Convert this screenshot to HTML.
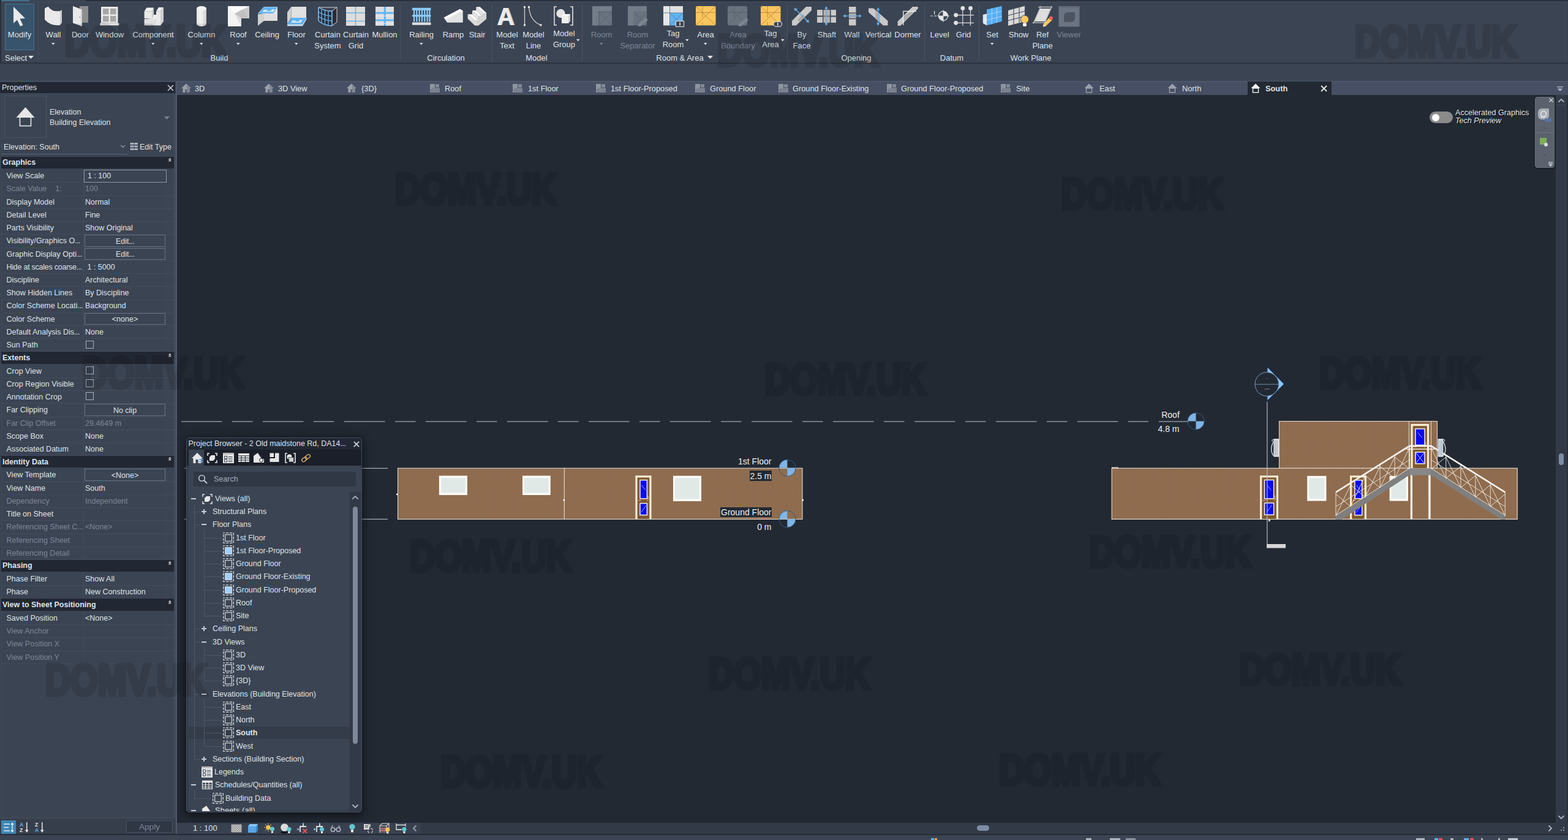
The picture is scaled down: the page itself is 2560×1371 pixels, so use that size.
<!DOCTYPE html>
<html><head><meta charset="utf-8"><title>Revit</title>
<style>
html,body{margin:0;padding:0;}
body{width:2560px;height:1371px;overflow:hidden;background:#3b4453;font-family:"Liberation Sans",sans-serif;color:#dfe3e8;position:relative;}
.a{position:absolute;box-sizing:border-box;}
.t{white-space:nowrap;line-height:16px;font-size:13px;}
.d{color:#7c8696;}
.b{font-weight:bold;}
.wm{font-weight:bold;font-size:71px;line-height:74px;color:#000;opacity:0.1;transform-origin:0 0;transform:scaleX(0.803);white-space:nowrap;-webkit-text-stroke:7px #000;letter-spacing:0px;}
svg{overflow:visible;}
</style></head><body>
<div class="a" style="left:140px;top:0px;width:2420px;height:1.5px;background:#2a313c;"></div>
<div class="a" style="left:0px;top:0px;width:48px;height:1.5px;background:#44718f;"></div>
<div class="a" style="left:0px;top:102.3px;width:2560px;height:1.4px;background:#2d343f;"></div>
<div class="a" style="left:0px;top:0px;width:2px;height:104px;background:#2a303b;"></div>
<div class="a" style="left:2px;top:2.6px;width:2553px;height:1px;background:#424b5a;"></div>
<div class="a" style="left:2554.5px;top:3px;width:1px;height:99px;background:#424b5a;"></div>
<div class="a" style="left:62px;top:6px;width:1px;height:94px;background:#4a5363;"></div>
<div class="a" style="left:653px;top:6px;width:1px;height:94px;background:#4a5363;"></div>
<div class="a" style="left:803px;top:6px;width:1px;height:94px;background:#4a5363;"></div>
<div class="a" style="left:950px;top:6px;width:1px;height:94px;background:#4a5363;"></div>
<div class="a" style="left:1285px;top:6px;width:1px;height:94px;background:#4a5363;"></div>
<div class="a" style="left:1509px;top:6px;width:1px;height:94px;background:#4a5363;"></div>
<div class="a" style="left:1598px;top:6px;width:1px;height:94px;background:#4a5363;"></div>
<div class="a" style="left:8px;top:6px;width:48px;height:76px;background:#37546c;border:1px solid #48728f;"></div>
<svg class="a" style="left:16px;top:10px;" width="32" height="34" viewBox="0 0 32 34"><polygon points="6,1 6,28 12,22.5 17,33 21.5,31 16.5,20.5 25,20" fill="#e9e9e9"/></svg>
<div class="a t " style="left:-168px;width:400px;text-align:center;top:49.4px;font-size:13px;">Modify</div>
<svg class="a" style="left:71px;top:10px;" width="32" height="34" viewBox="0 0 32 34"><path d="M2,4 Q5,1 8,1 Q14,10 27,8 L27,31 Q12,33 2,22 Z" fill="#e9e9e9"/><path d="M27,8 L30,6 L30,27 L27,31 Z" fill="#cfcfcf"/></svg>
<div class="a t " style="left:-113px;width:400px;text-align:center;top:49.4px;font-size:13px;">Wall</div>
<svg class="a" style="left:84.2px;top:70px;" width="5.6" height="3.3" viewBox="0 0 5.6 3.3"><polygon points="0,0 5.6,0 2.8,3.3" fill="#e4e7eb"/></svg>
<svg class="a" style="left:115px;top:10px;" width="32" height="34" viewBox="0 0 32 34"><rect x="15" y="0" width="14" height="27" fill="#8e8e8e"/><polygon points="4,0 19,5.5 19,33 4,27.5" fill="#e9e9e9"/><polygon points="17,5 19,5.5 19,33 17,32.3" fill="#cfcfcf"/><circle cx="15.5" cy="18" r="0.9" fill="#999"/></svg>
<div class="a t " style="left:-69px;width:400px;text-align:center;top:49.4px;font-size:13px;">Door</div>
<svg class="a" style="left:163px;top:10px;" width="32" height="34" viewBox="0 0 32 34"><rect x="2" y="1" width="27.5" height="26.5" fill="#e9e9e9"/><rect x="5" y="4" width="9.5" height="9.5" fill="#a6a6a6"/><rect x="17" y="4" width="9.5" height="9.5" fill="#a6a6a6"/><rect x="5" y="16" width="9.5" height="9.5" fill="#a6a6a6"/><rect x="17" y="16" width="9.5" height="9.5" fill="#a6a6a6"/><rect x="0" y="27.5" width="31.5" height="4" rx="1.5" fill="#e2e2e2"/></svg>
<div class="a t " style="left:-21px;width:400px;text-align:center;top:49.4px;font-size:13px;">Window</div>
<svg class="a" style="left:234px;top:10px;" width="32" height="34" viewBox="0 0 32 34"><polygon points="1.6,8.5 5.5,2.5 17,2.5 14,8.5" fill="#f2f2f2"/><rect x="1.6" y="8.5" width="12.4" height="11.5" fill="#e9e9e9"/><polygon points="14,8.5 17,2.5 17,14 14,20" fill="#cfcfcf"/><polygon points="21,8.5 25,2 33,2 28,8.5" fill="#f2f2f2"/><rect x="21" y="8.5" width="7" height="23" fill="#e9e9e9"/><polygon points="28,8.5 33,2 33,25 28,31.5" fill="#cfcfcf"/><rect x="1.6" y="21" width="20" height="10.5" fill="#e0e0e0"/><polygon points="14,20 17,14 21,14 21,21 1.6,21" fill="#ededed"/></svg>
<div class="a t " style="left:50px;width:400px;text-align:center;top:49.4px;font-size:13px;">Component</div>
<svg class="a" style="left:247.2px;top:70px;" width="5.6" height="3.3" viewBox="0 0 5.6 3.3"><polygon points="0,0 5.6,0 2.8,3.3" fill="#e4e7eb"/></svg>
<svg class="a" style="left:313px;top:10px;" width="32" height="34" viewBox="0 0 32 34"><defs><linearGradient id="cg" x1="0" x2="1"><stop offset="0" stop-color="#e2e2e2"/><stop offset="0.45" stop-color="#f4f4f4"/><stop offset="1" stop-color="#cdcdcd"/></linearGradient></defs><path d="M8,4 A8,4 0 0 1 24,4 L24,29 A8,4 0 0 1 8,29 Z" fill="url(#cg)"/><ellipse cx="16" cy="4" rx="8" ry="3.6" fill="#f3f3f3"/></svg>
<div class="a t " style="left:129px;width:400px;text-align:center;top:49.4px;font-size:13px;">Column</div>
<svg class="a" style="left:326.2px;top:70px;" width="5.6" height="3.3" viewBox="0 0 5.6 3.3"><polygon points="0,0 5.6,0 2.8,3.3" fill="#e4e7eb"/></svg>
<svg class="a" style="left:373px;top:10px;" width="32" height="34" viewBox="0 0 32 34"><polygon points="-1,0 34,0 34,20 21,20 21,33 -1,33" fill="#f3f3f3"/><polygon points="10,12 34,0 34,20 21,20" fill="#c9c9c9"/><polygon points="10,12 21,20 21,33" fill="#dcdcdc"/><polygon points="-1,0 34,0 10,12" fill="#fafafa"/><polygon points="10,12 24,5 31,17 21,20" fill="#b9b9b9" opacity="0.55"/></svg>
<div class="a t " style="left:189px;width:400px;text-align:center;top:49.4px;font-size:13px;">Roof</div>
<svg class="a" style="left:386.2px;top:70px;" width="5.6" height="3.3" viewBox="0 0 5.6 3.3"><polygon points="0,0 5.6,0 2.8,3.3" fill="#e4e7eb"/></svg>
<svg class="a" style="left:420px;top:10px;" width="32" height="34" viewBox="0 0 32 34"><polygon points="1,12 11,1 33,1 33,13 11,13" fill="#e3e3e3"/><polygon points="2,12 11,1.5 33,1.5 26,12" fill="#5fb3f3"/><polygon points="8,9.5 11,6 17,6 15,8 22,8 24,5 29,5 26,9.5" fill="#d9eefc" opacity="0.9"/><rect x="11" y="13" width="22" height="11" fill="#dedede"/><polygon points="1,13 11,13 11,24 1,32" fill="#d0d0d0"/></svg>
<div class="a t " style="left:236px;width:400px;text-align:center;top:49.4px;font-size:13px;">Ceiling</div>
<svg class="a" style="left:468px;top:10px;" width="32" height="34" viewBox="0 0 32 34"><rect x="7.5" y="1" width="24.5" height="18" fill="#e0e0e0"/><polygon points="1,10 7.5,1 7.5,19 1,29" fill="#cfcfcf"/><polygon points="1,29.5 8,19 32.5,19 26,29.5" fill="#5fb3f3"/><polygon points="7,27 9.5,23.5 15,23.5 14,25 20,25 21.5,22.5 26,22.5 23,27" fill="#d9eefc" opacity="0.9"/><polygon points="1,29.5 26,29.5 32.5,19 32.5,21.5 26,32.5 1,32.5" fill="#c8e3f8"/></svg>
<div class="a t " style="left:284px;width:400px;text-align:center;top:49.4px;font-size:13px;">Floor</div>
<svg class="a" style="left:481.2px;top:70px;" width="5.6" height="3.3" viewBox="0 0 5.6 3.3"><polygon points="0,0 5.6,0 2.8,3.3" fill="#e4e7eb"/></svg>
<svg class="a" style="left:519px;top:10px;" width="32" height="34" viewBox="0 0 32 34"><path d="M1,2 Q12,9 23,8 L31,2 L31,26 L23,32 Q10,32 1,24 Z" fill="#252d3a" stroke="#d8d8d8" stroke-width="1"/><path d="M1,2 L31,2 M23,8 L23,32" stroke="#d8d8d8" stroke-width="1" fill="none"/><path d="M1,2 Q12,9 23,8 M1,9.5 Q12,16.5 23,16 M1,17 Q12,24 23,24 M1,24 Q10,32 23,32 M1,2 L1,24 M6,5 L6,28 M11.5,7 L11.5,30.5 M17,8 L17,31.8 M23,8 L23,32" stroke="#6ab4ee" stroke-width="1.3" fill="none"/></svg>
<div class="a t " style="left:335px;width:400px;text-align:center;top:49.4px;font-size:13px;">Curtain</div>
<div class="a t " style="left:335px;width:400px;text-align:center;top:67.0px;font-size:13px;">System</div>
<svg class="a" style="left:565px;top:10px;" width="32" height="34" viewBox="0 0 32 34"><rect x="0" y="1" width="31" height="31" fill="#dddddd"/><rect x="14.8" y="1" width="1.4" height="31" fill="#5fb3f3"/><rect x="0" y="10.3" width="31" height="1.4" fill="#5fb3f3"/><rect x="0" y="23.8" width="31" height="1.4" fill="#5fb3f3"/></svg>
<div class="a t " style="left:381px;width:400px;text-align:center;top:49.4px;font-size:13px;">Curtain</div>
<div class="a t " style="left:381px;width:400px;text-align:center;top:67.0px;font-size:13px;">Grid</div>
<svg class="a" style="left:612px;top:10px;" width="32" height="34" viewBox="0 0 32 34"><rect x="1" y="1" width="30" height="31" fill="#dddddd"/><rect x="14.8" y="1" width="3" height="31" fill="#5fb3f3"/><rect x="1" y="9.7" width="30" height="2.8" fill="#5fb3f3"/><rect x="1" y="21.6" width="30" height="2.8" fill="#5fb3f3"/><rect x="1" y="15.5" width="30" height="1" fill="#f2f2f2"/><rect x="1" y="27.5" width="30" height="1" fill="#f2f2f2"/></svg>
<div class="a t " style="left:428px;width:400px;text-align:center;top:49.4px;font-size:13px;">Mullion</div>
<svg class="a" style="left:672px;top:10px;" width="32" height="34" viewBox="0 0 32 34"><rect x="1" y="2.8" width="30.5" height="4" fill="#8fcbf7"/><rect x="1" y="14.2" width="30.5" height="3" fill="#8fcbf7"/><rect x="3" y="6" width="2.2" height="19.5" fill="#8fcbf7"/><rect x="7.3" y="6" width="2.2" height="19.5" fill="#8fcbf7"/><rect x="11.6" y="6" width="2.2" height="19.5" fill="#8fcbf7"/><rect x="15.9" y="6" width="2.2" height="19.5" fill="#8fcbf7"/><rect x="20.2" y="6" width="2.2" height="19.5" fill="#8fcbf7"/><rect x="24.5" y="6" width="2.2" height="19.5" fill="#8fcbf7"/><rect x="28.3" y="6" width="2.2" height="19.5" fill="#8fcbf7"/><rect x="1" y="26.5" width="30.5" height="4.3" fill="#dedede"/></svg>
<div class="a t " style="left:488px;width:400px;text-align:center;top:49.4px;font-size:13px;">Railing</div>
<svg class="a" style="left:685.2px;top:70px;" width="5.6" height="3.3" viewBox="0 0 5.6 3.3"><polygon points="0,0 5.6,0 2.8,3.3" fill="#e4e7eb"/></svg>
<svg class="a" style="left:724px;top:10px;" width="32" height="34" viewBox="0 0 32 34"><polygon points="0.5,18.8 27,4.8 31.5,7.6 31.5,26.6 6,26.6" fill="#ededed"/><polygon points="0.5,18.8 27,4.8 31.5,7.6 6,21" fill="#fafafa"/><polygon points="6,21 31.5,7.6 31.5,26.6 6,26.6" fill="#e2e2e2"/></svg>
<div class="a t " style="left:540px;width:400px;text-align:center;top:49.4px;font-size:13px;">Ramp</div>
<svg class="a" style="left:763px;top:10px;" width="32" height="34" viewBox="0 0 32 34"><polygon points="24.9,11.1 31.2,11.1 31.2,20.9 18.5,31.5 12.2,31.5 11.2,30.05 11.2,23.05 18.6,23.05 18.6,16.75 24.9,16.75" fill="#d4d4d4"/><polygon points="14.3,1.25 20.6,1.25 31.2,11.1 24.9,11.1" fill="#f8f8f8"/><polygon points="14.3,6.9 8,6.9 18.6,16.75 24.9,16.75" fill="#f8f8f8"/><polygon points="8,13.2 0.6,13.2 11.2,23.05 18.6,23.05" fill="#f8f8f8"/><polygon points="14.3,1.25 14.3,6.9 24.9,16.75 24.9,11.1" fill="#e4e4e4"/><polygon points="8,6.9 8,13.2 18.6,23.05 18.6,16.75" fill="#e4e4e4"/><polygon points="0.6,13.2 0.6,20.2 12.2,31.5 11.2,23.05" fill="#e4e4e4"/><polygon points="0.6,20.2 12.2,31.5 18.5,31.5 11.2,23.05" fill="#dadada"/></svg>
<div class="a t " style="left:579px;width:400px;text-align:center;top:49.4px;font-size:13px;">Stair</div>
<svg class="a" style="left:812px;top:10px;" width="32" height="34" viewBox="0 0 32 34"><text x="15" y="31" font-family="Liberation Sans,sans-serif" font-weight="bold" font-size="40" text-anchor="middle" fill="#c4c4c4">A</text><text x="13.5" y="31" font-family="Liberation Sans,sans-serif" font-weight="bold" font-size="40" text-anchor="middle" fill="#ececec">A</text></svg>
<div class="a t " style="left:628px;width:400px;text-align:center;top:49.4px;font-size:13px;">Model</div>
<div class="a t " style="left:628px;width:400px;text-align:center;top:67.0px;font-size:13px;">Text</div>
<svg class="a" style="left:855px;top:10px;" width="32" height="34" viewBox="0 0 32 34"><path d="M1.5,1 L1.5,31 M8.5,1 Q10,24 28,31" stroke="#d2d2d2" stroke-width="1.3" fill="none"/><rect x="0" y="0" width="3" height="3" fill="#e6e6e6"/><rect x="0" y="29.5" width="3" height="3" fill="#e6e6e6"/><rect x="7" y="0" width="3" height="3" fill="#e6e6e6"/><rect x="26.5" y="29.5" width="3" height="3" fill="#e6e6e6"/></svg>
<div class="a t " style="left:671px;width:400px;text-align:center;top:49.4px;font-size:13px;">Model</div>
<div class="a t " style="left:671px;width:400px;text-align:center;top:67.0px;font-size:13px;">Line</div>
<svg class="a" style="left:905px;top:10px;" width="32" height="34" viewBox="0 0 32 34"><path d="M4,1 L0,1 L0,31 L4,31 M26,1 L30,1 L30,31 L26,31" stroke="#e0e0e0" stroke-width="1.6" fill="none"/><circle cx="10.5" cy="12" r="7.2" fill="#e4e4e4"/><polygon points="12,16 15,13 26,13 26,24 23,28 12,28" fill="#f0f0f0"/><polygon points="23,16 26,13 26,24 23,28" fill="#cfcfcf"/><polygon points="12,16 15,13 26,13 23,16" fill="#fafafa"/></svg>
<div class="a t " style="left:721px;width:400px;text-align:center;top:47.3px;font-size:13px;">Model</div>
<div class="a t " style="left:721px;width:400px;text-align:center;top:64.8px;font-size:13px;">Group</div>
<svg class="a" style="left:940.7px;top:63.5px;" width="5.6" height="3.3" viewBox="0 0 5.6 3.3"><polygon points="0,0 5.6,0 2.8,3.3" fill="#e4e7eb"/></svg>
<svg class="a" style="left:966px;top:10px;" width="32" height="34" viewBox="0 0 32 34"><rect x="1" y="0" width="32" height="31.5" fill="#6a7380"/><rect x="1" y="0" width="9" height="31.5" fill="#747d8a"/><rect x="10" y="0" width="23" height="8" fill="#747d8a"/><path d="M12,10 L33,31.5 M33,10 L12,31.5 M12,8 L12,31.5 M10,10 L33,10" stroke="#596270" stroke-width="1" fill="none"/></svg>
<div class="a t d" style="left:782px;width:400px;text-align:center;top:49.4px;font-size:13px;">Room</div>
<svg class="a" style="left:979.2px;top:70px;" width="5.6" height="3.3" viewBox="0 0 5.6 3.3"><polygon points="0,0 5.6,0 2.8,3.3" fill="#7c8696"/></svg>
<svg class="a" style="left:1025px;top:10px;" width="32" height="34" viewBox="0 0 32 34"><rect x="0" y="0" width="31" height="31.5" fill="#69727f"/><rect x="0" y="0" width="9" height="31.5" fill="#737c89"/><rect x="9" y="0" width="22" height="8" fill="#737c89"/><path d="M11,10 L31,31.5 M31,10 L11,31.5" stroke="#596270" stroke-width="1"/><polygon points="29,19 33,22.5 21,33 17,33 17,29.5" fill="#7b8491"/></svg>
<div class="a t d" style="left:841px;width:400px;text-align:center;top:49.4px;font-size:13px;">Room</div>
<div class="a t d" style="left:841px;width:400px;text-align:center;top:67.0px;font-size:13px;">Separator</div>
<svg class="a" style="left:1083px;top:10px;" width="32" height="34" viewBox="0 0 32 34"><rect x="0" y="0" width="10.5" height="31.5" fill="#e6e6e6"/><rect x="10.5" y="0" width="21.5" height="11" fill="#e0e0e0"/><rect x="10.5" y="11" width="21.5" height="20.5" fill="#62b4f1"/><path d="M10.5,11 L32,31.5 M32,11 L10.5,31.5 M10.5,0 L10.5,31.5 M0,11 L32,11" stroke="#5a7d99" stroke-width="0.9" fill="none"/><rect x="20.5" y="24.5" width="13" height="9" fill="#3a4250" stroke="#d8d8d8" stroke-width="1.2"/><rect x="26.3" y="26.3" width="1.6" height="5.4" fill="#e8e8e8"/></svg>
<div class="a t " style="left:899px;width:400px;text-align:center;top:47.3px;font-size:13px;">Tag</div>
<div class="a t " style="left:899px;width:400px;text-align:center;top:64.8px;font-size:13px;">Room</div>
<svg class="a" style="left:1119.2px;top:63.5px;" width="5.6" height="3.3" viewBox="0 0 5.6 3.3"><polygon points="0,0 5.6,0 2.8,3.3" fill="#e4e7eb"/></svg>
<svg class="a" style="left:1136px;top:10px;" width="32" height="34" viewBox="0 0 32 34"><rect x="0" y="0" width="32.5" height="31.5" rx="2" fill="#fbc660"/><path d="M1,1 L31.5,30.5 M31.5,1 L1,30.5 M11,0 L11,18 M0,10.4 L32.5,10.4 M11,26 L11,31.5" stroke="#b98d3c" stroke-width="1" fill="none"/></svg>
<div class="a t " style="left:952px;width:400px;text-align:center;top:49.4px;font-size:13px;">Area</div>
<svg class="a" style="left:1149.2px;top:70px;" width="5.6" height="3.3" viewBox="0 0 5.6 3.3"><polygon points="0,0 5.6,0 2.8,3.3" fill="#e4e7eb"/></svg>
<svg class="a" style="left:1189px;top:10px;" width="32" height="34" viewBox="0 0 32 34"><rect x="-1" y="0" width="32" height="31.5" rx="2" fill="#69727f"/><path d="M0,1 L30,30.5 M30,1 L0,30.5 M10,0 L10,18 M-1,10.4 L31,10.4" stroke="#596270" stroke-width="1" fill="none"/><polygon points="29,19 33,22.5 21,33 17,33 17,29.5" fill="#7b8491"/></svg>
<div class="a t d" style="left:1005px;width:400px;text-align:center;top:49.4px;font-size:13px;">Area</div>
<div class="a t d" style="left:1005px;width:400px;text-align:center;top:67.0px;font-size:13px;">Boundary</div>
<svg class="a" style="left:1242px;top:10px;" width="32" height="34" viewBox="0 0 32 34"><rect x="0" y="0" width="32.5" height="31.5" rx="2" fill="#fbc660"/><path d="M1,1 L31.5,30.5 M31.5,1 L1,30.5 M11,0 L11,18 M0,10.4 L32.5,10.4 M11,26 L11,31.5" stroke="#b98d3c" stroke-width="1" fill="none"/><rect x="21" y="25.3" width="13.5" height="8" rx="4" fill="#3a4250" stroke="#d8d8d8" stroke-width="1.2"/><rect x="27" y="26.8" width="1.5" height="5" fill="#e8e8e8"/></svg>
<div class="a t " style="left:1058px;width:400px;text-align:center;top:47.3px;font-size:13px;">Tag</div>
<div class="a t " style="left:1058px;width:400px;text-align:center;top:64.8px;font-size:13px;">Area</div>
<svg class="a" style="left:1274.7px;top:63.5px;" width="5.6" height="3.3" viewBox="0 0 5.6 3.3"><polygon points="0,0 5.6,0 2.8,3.3" fill="#e4e7eb"/></svg>
<svg class="a" style="left:1293px;top:10px;" width="32" height="34" viewBox="0 0 32 34"><defs><pattern id="hp" width="3" height="3" patternUnits="userSpaceOnUse" patternTransform="rotate(45)"><rect width="3" height="3" fill="#b9b9b9"/><rect width="1.6" height="3" fill="#d8d8d8"/></pattern></defs><polygon points="0,31.5 0,24 23,1 32,1 32,7 7,31.5" fill="url(#hp)"/><path d="M4.6,4 L27,26" stroke="#6aaee6" stroke-width="1.5"/><polygon points="3.5,3 9,4.2 4.7,8.5" fill="#6aaee6"/><polygon points="28,27 22.5,25.8 26.8,21.5" fill="#6aaee6"/><polygon points="9,22.5 18,13.5 21,16.5 12,25.5" fill="#9a9a9a" opacity="0.7"/></svg>
<div class="a t " style="left:1109px;width:400px;text-align:center;top:49.4px;font-size:13px;">By</div>
<div class="a t " style="left:1109px;width:400px;text-align:center;top:67.0px;font-size:13px;">Face</div>
<svg class="a" style="left:1334px;top:10px;" width="32" height="34" viewBox="0 0 32 34"><defs><pattern id="hp" width="3" height="3" patternUnits="userSpaceOnUse" patternTransform="rotate(45)"><rect width="3" height="3" fill="#b9b9b9"/><rect width="1.6" height="3" fill="#d8d8d8"/></pattern></defs><rect x="0" y="6" width="31" height="9.5" fill="url(#hp)"/><rect x="0" y="17.5" width="31" height="9.5" fill="url(#hp)"/><rect x="9" y="6" width="1.5" height="21" fill="#3b4453"/><rect x="21" y="6" width="1.5" height="21" fill="#3b4453"/><rect x="10.5" y="6" width="10.5" height="21" fill="#9c9c9c" opacity="0.55"/><path d="M15,2 L15,30" stroke="#6aaee6" stroke-width="1.4"/><polygon points="15,0 17.8,4.5 12.2,4.5" fill="#6aaee6"/><polygon points="15,32 17.8,27.5 12.2,27.5" fill="#6aaee6"/></svg>
<div class="a t " style="left:1150px;width:400px;text-align:center;top:49.4px;font-size:13px;">Shaft</div>
<svg class="a" style="left:1375px;top:10px;" width="32" height="34" viewBox="0 0 32 34"><defs><pattern id="hp" width="3" height="3" patternUnits="userSpaceOnUse" patternTransform="rotate(45)"><rect width="3" height="3" fill="#b9b9b9"/><rect width="1.6" height="3" fill="#d8d8d8"/></pattern></defs><rect x="11" y="1" width="11.5" height="30.5" fill="url(#hp)"/><rect x="11" y="10.5" width="11.5" height="1.3" fill="#3b4453"/><rect x="11" y="20" width="11.5" height="1.3" fill="#3b4453"/><rect x="11" y="11.8" width="11.5" height="8.2" fill="#9c9c9c" opacity="0.6"/><path d="M3,16 L30,16" stroke="#6aaee6" stroke-width="1.4"/><polygon points="1,16 5.5,13.2 5.5,18.8" fill="#6aaee6"/><polygon points="32,16 27.5,13.2 27.5,18.8" fill="#6aaee6"/></svg>
<div class="a t " style="left:1191px;width:400px;text-align:center;top:49.4px;font-size:13px;">Wall</div>
<svg class="a" style="left:1418px;top:10px;" width="32" height="34" viewBox="0 0 32 34"><defs><pattern id="hp" width="3" height="3" patternUnits="userSpaceOnUse" patternTransform="rotate(45)"><rect width="3" height="3" fill="#b9b9b9"/><rect width="1.6" height="3" fill="#d8d8d8"/></pattern></defs><polygon points="0,3.4 8,3.4 31.5,24 31.5,31.5 24,31.5 0,10" fill="url(#hp)"/><polygon points="11,8 19,14 19,26 11,19" fill="#9c9c9c" opacity="0.6"/><path d="M15.6,4 L15.6,30" stroke="#6aaee6" stroke-width="1.4"/><polygon points="15.6,2 18.4,6.5 12.8,6.5" fill="#6aaee6"/><polygon points="15.6,32 18.4,27.5 12.8,27.5" fill="#6aaee6"/></svg>
<div class="a t " style="left:1234px;width:400px;text-align:center;top:49.4px;font-size:13px;">Vertical</div>
<svg class="a" style="left:1466px;top:10px;" width="32" height="34" viewBox="0 0 32 34"><defs><pattern id="hp" width="3" height="3" patternUnits="userSpaceOnUse" patternTransform="rotate(45)"><rect width="3" height="3" fill="#b9b9b9"/><rect width="1.6" height="3" fill="#d8d8d8"/></pattern></defs><polygon points="-0.4,32 -0.4,25 24,1 32.7,1 32.7,4 4,32" fill="url(#hp)"/><polygon points="9,15.5 24,8.5 24,11 12,23 9,25" fill="#a3a3a3" opacity="0.8"/><path d="M8.8,31 L8.8,8.3 L30,8.3" stroke="#f0f0f0" stroke-width="1.3" fill="none"/></svg>
<div class="a t " style="left:1282px;width:400px;text-align:center;top:49.4px;font-size:13px;">Dormer</div>
<svg class="a" style="left:1518px;top:10px;" width="32" height="34" viewBox="0 0 32 34"><circle cx="22" cy="16" r="7.6" fill="none" stroke="#e0e0e0" stroke-width="1.3"/><path d="M22,16 L22,8.4 A7.6,7.6 0 0 1 29.6,16 Z M22,16 L22,23.6 A7.6,7.6 0 0 1 14.4,16 Z" fill="#e6e6e6"/><path d="M22,6 L22,26 M12,16 L32,16" stroke="#e0e0e0" stroke-width="1"/><path d="M1,16 L5,16 M7,16 L11,16" stroke="#e0e0e0" stroke-width="1"/><rect x="7" y="8" width="1.3" height="5.5" fill="#e0e0e0"/></svg>
<div class="a t " style="left:1334px;width:400px;text-align:center;top:49.4px;font-size:13px;">Level</div>
<svg class="a" style="left:1557px;top:10px;" width="32" height="34" viewBox="0 0 32 34"><path d="M14.8,3.4 L14.8,32 M27.5,3.4 L27.5,32 M3.6,14.6 L33,14.6 M3.6,27.3 L33,27.3" stroke="#dcdcdc" stroke-width="1.2" fill="none"/><circle cx="14.8" cy="3.4" r="3.4" fill="#e2e2e2"/><circle cx="27.5" cy="3.4" r="3.4" fill="#e2e2e2"/><circle cx="3.6" cy="14.6" r="3.4" fill="#e2e2e2"/><circle cx="3.6" cy="27.3" r="3.4" fill="#e2e2e2"/></svg>
<div class="a t " style="left:1373px;width:400px;text-align:center;top:49.4px;font-size:13px;">Grid</div>
<svg class="a" style="left:1604px;top:10px;" width="32" height="34" viewBox="0 0 32 34"><polygon points="7,5.5 31.7,-0.2 31.7,25 7,31.5" fill="#58aef2"/><path d="M15.2,3.6 L15.2,29.3 M23.4,1.7 L23.4,27.2 M7,14.2 L31.7,8.2 M7,22.8 L31.7,16.6" stroke="#a9d6f8" stroke-width="1" fill="none"/><polygon points="0.8,14 7,12.5 7,31.5 0.8,28" fill="#e8e8e8"/></svg>
<div class="a t " style="left:1420px;width:400px;text-align:center;top:49.4px;font-size:13px;">Set</div>
<svg class="a" style="left:1617.2px;top:70px;" width="5.6" height="3.3" viewBox="0 0 5.6 3.3"><polygon points="0,0 5.6,0 2.8,3.3" fill="#e4e7eb"/></svg>
<svg class="a" style="left:1647px;top:10px;" width="32" height="34" viewBox="0 0 32 34"><polygon points="-1,7 26,-0.2 26,25 -1,32" fill="#d9d9d9"/><path d="M8,4.6 L8,29.6 M17,2.2 L17,27.3 M-1,15.3 L26,8.2 M-1,23.6 L26,16.6" stroke="#3b4453" stroke-width="1" fill="none"/><circle cx="26" cy="21.6" r="6.6" fill="#fcc75f" stroke="#3b4453" stroke-width="1"/><rect x="23" y="27.5" width="6" height="5.5" rx="1.5" fill="#f0f0f0"/></svg>
<div class="a t " style="left:1463px;width:400px;text-align:center;top:49.4px;font-size:13px;">Show</div>
<svg class="a" style="left:1686px;top:10px;" width="32" height="34" viewBox="0 0 32 34"><polygon points="12,4 30,4 20.7,25 2.5,25" fill="#dedede"/><path d="M9,1.5 L32,1.5 M0,27 L23,27 M13.5,0 L1,28.5 M31.5,0 L19,28.5" stroke="#bdbdbd" stroke-width="1.4" fill="none"/><polygon points="27,19 31.5,23 21,33 17,33.6 17.5,29.5" fill="#fbc660"/><polygon points="17,33.6 17.5,29.5 21,33" fill="#e8e8e8"/><circle cx="30" cy="19.5" r="3" fill="#e8605a"/></svg>
<div class="a t " style="left:1502px;width:400px;text-align:center;top:49.4px;font-size:13px;">Ref</div>
<div class="a t " style="left:1502px;width:400px;text-align:center;top:67.0px;font-size:13px;">Plane</div>
<svg class="a" style="left:1729px;top:10px;" width="32" height="34" viewBox="0 0 32 34"><rect x="-0.5" y="0" width="34" height="33.5" fill="#6b7482"/><rect x="-0.5" y="0" width="34" height="3" fill="#626a78"/><polygon points="8,14 12,10 26,10 26,22 22,26 8,26" fill="#4d5562"/></svg>
<div class="a t d" style="left:1545px;width:400px;text-align:center;top:49.4px;font-size:13px;">Viewer</div>
<div class="a t " style="left:8px;top:86.8px;font-size:13px;">Select</div>
<div class="a t " style="left:158px;width:400px;text-align:center;top:86.8px;font-size:13px;">Build</div>
<div class="a t " style="left:528px;width:400px;text-align:center;top:86.8px;font-size:13px;">Circulation</div>
<div class="a t " style="left:676px;width:400px;text-align:center;top:86.8px;font-size:13px;">Model</div>
<div class="a t " style="left:910px;width:400px;text-align:center;top:86.8px;font-size:13px;">Room &amp; Area</div>
<div class="a t " style="left:1198px;width:400px;text-align:center;top:86.8px;font-size:13px;">Opening</div>
<div class="a t " style="left:1354px;width:400px;text-align:center;top:86.8px;font-size:13px;">Datum</div>
<div class="a t " style="left:1483px;width:400px;text-align:center;top:86.8px;font-size:13px;">Work Plane</div>
<svg class="a" style="left:46px;top:91px;" width="9" height="5" viewBox="0 0 9 5"><polygon points="0,0 9,0 4.5,5" fill="#e4e7eb"/></svg>
<svg class="a" style="left:1155px;top:91px;" width="9" height="5" viewBox="0 0 9 5"><polygon points="0,0 9,0 4.5,5" fill="#e4e7eb"/></svg>
<div class="a" style="left:288.5px;top:132px;width:2271.5px;height:23px;background:#464f63;"></div>
<div class="a" style="left:0px;top:132.2px;width:2560px;height:1.5px;background:#4d576a;"></div>
<svg class="a" style="left:296px;top:136px;" width="16" height="15" viewBox="0 0 16 15"><polygon points="0,8 8,0.5 16,8 13.5,8 13.5,15 2.5,15 2.5,8" fill="#9aa1ad"/><polygon points="8,0.5 16,8 13.5,8 13.5,15 9,15 9,6" fill="#7f8794"/><rect x="6" y="10" width="3" height="5" fill="#5c6573"/></svg>
<div class="a t " style="left:318px;top:136.5px;font-size:12.8px;">3D</div>
<svg class="a" style="left:431px;top:136px;" width="16" height="15" viewBox="0 0 16 15"><polygon points="0,8 8,0.5 16,8 13.5,8 13.5,15 2.5,15 2.5,8" fill="#9aa1ad"/><polygon points="8,0.5 16,8 13.5,8 13.5,15 9,15 9,6" fill="#7f8794"/><rect x="6" y="10" width="3" height="5" fill="#5c6573"/></svg>
<div class="a t " style="left:454px;top:136.5px;font-size:12.8px;">3D View</div>
<svg class="a" style="left:566px;top:136px;" width="16" height="15" viewBox="0 0 16 15"><polygon points="0,8 8,0.5 16,8 13.5,8 13.5,15 2.5,15 2.5,8" fill="#9aa1ad"/><polygon points="8,0.5 16,8 13.5,8 13.5,15 9,15 9,6" fill="#7f8794"/><rect x="6" y="10" width="3" height="5" fill="#5c6573"/></svg>
<div class="a t " style="left:590px;top:136.5px;font-size:12.8px;">{3D}</div>
<svg class="a" style="left:702px;top:136px;" width="16" height="15" viewBox="0 0 16 15"><rect x="0" y="1" width="8" height="9" fill="#8d95a1"/><rect x="9" y="1.5" width="6" height="5" fill="#848c99"/><rect x="3" y="7.5" width="13" height="7.5" fill="#7a8290"/><rect x="0" y="10.5" width="2.5" height="4.5" fill="#8d95a1"/></svg>
<div class="a t " style="left:726px;top:136.5px;font-size:12.8px;">Roof</div>
<svg class="a" style="left:837px;top:136px;" width="16" height="15" viewBox="0 0 16 15"><rect x="0" y="1" width="8" height="9" fill="#8d95a1"/><rect x="9" y="1.5" width="6" height="5" fill="#848c99"/><rect x="3" y="7.5" width="13" height="7.5" fill="#7a8290"/><rect x="0" y="10.5" width="2.5" height="4.5" fill="#8d95a1"/></svg>
<div class="a t " style="left:862px;top:136.5px;font-size:12.8px;">1st Floor</div>
<svg class="a" style="left:973px;top:136px;" width="16" height="15" viewBox="0 0 16 15"><rect x="0" y="1" width="8" height="9" fill="#8d95a1"/><rect x="9" y="1.5" width="6" height="5" fill="#848c99"/><rect x="3" y="7.5" width="13" height="7.5" fill="#7a8290"/><rect x="0" y="10.5" width="2.5" height="4.5" fill="#8d95a1"/></svg>
<div class="a t " style="left:997px;top:136.5px;font-size:12.8px;">1st Floor-Proposed</div>
<svg class="a" style="left:1135px;top:136px;" width="16" height="15" viewBox="0 0 16 15"><rect x="0" y="1" width="8" height="9" fill="#8d95a1"/><rect x="9" y="1.5" width="6" height="5" fill="#848c99"/><rect x="3" y="7.5" width="13" height="7.5" fill="#7a8290"/><rect x="0" y="10.5" width="2.5" height="4.5" fill="#8d95a1"/></svg>
<div class="a t " style="left:1159px;top:136.5px;font-size:12.8px;">Ground Floor</div>
<svg class="a" style="left:1271px;top:136px;" width="16" height="15" viewBox="0 0 16 15"><rect x="0" y="1" width="8" height="9" fill="#8d95a1"/><rect x="9" y="1.5" width="6" height="5" fill="#848c99"/><rect x="3" y="7.5" width="13" height="7.5" fill="#7a8290"/><rect x="0" y="10.5" width="2.5" height="4.5" fill="#8d95a1"/></svg>
<div class="a t " style="left:1294px;top:136.5px;font-size:12.8px;">Ground Floor-Existing</div>
<svg class="a" style="left:1448px;top:136px;" width="16" height="15" viewBox="0 0 16 15"><rect x="0" y="1" width="8" height="9" fill="#8d95a1"/><rect x="9" y="1.5" width="6" height="5" fill="#848c99"/><rect x="3" y="7.5" width="13" height="7.5" fill="#7a8290"/><rect x="0" y="10.5" width="2.5" height="4.5" fill="#8d95a1"/></svg>
<div class="a t " style="left:1471px;top:136.5px;font-size:12.8px;">Ground Floor-Proposed</div>
<svg class="a" style="left:1634px;top:136px;" width="16" height="15" viewBox="0 0 16 15"><rect x="0" y="1" width="8" height="9" fill="#8d95a1"/><rect x="9" y="1.5" width="6" height="5" fill="#848c99"/><rect x="3" y="7.5" width="13" height="7.5" fill="#7a8290"/><rect x="0" y="10.5" width="2.5" height="4.5" fill="#8d95a1"/></svg>
<div class="a t " style="left:1659px;top:136.5px;font-size:12.8px;">Site</div>
<svg class="a" style="left:1770px;top:136px;" width="16" height="16" viewBox="0 0 16 16"><polygon points="0.5,8 8,0.5 15.5,8" fill="#9aa1ad"/><rect x="3.5" y="8" width="9" height="7" fill="none" stroke="#9aa1ad" stroke-width="1.4"/></svg>
<div class="a t " style="left:1795px;top:136.5px;font-size:12.8px;">East</div>
<svg class="a" style="left:1906px;top:136px;" width="16" height="16" viewBox="0 0 16 16"><polygon points="0.5,8 8,0.5 15.5,8" fill="#9aa1ad"/><rect x="3.5" y="8" width="9" height="7" fill="none" stroke="#9aa1ad" stroke-width="1.4"/></svg>
<div class="a t " style="left:1930px;top:136.5px;font-size:12.8px;">North</div>
<div class="a" style="left:2037px;top:133px;width:137px;height:22px;background:#222933;"></div>
<svg class="a" style="left:2042px;top:135.5px;" width="16" height="16" viewBox="0 0 16 16"><polygon points="0.5,8 8,0.5 15.5,8" fill="#f0f0f0"/><rect x="3.5" y="8" width="9" height="7" fill="none" stroke="#f0f0f0" stroke-width="1.4"/></svg>
<div class="a t b" style="left:2066px;top:136.5px;font-size:12.8px;">South</div>
<svg class="a" style="left:2156px;top:139px;" width="11" height="11" viewBox="0 0 11 11"><path d="M1,1 L10,10 M10,1 L1,10" stroke="#e6e6e6" stroke-width="1.8"/></svg>
<svg class="a" style="left:2542px;top:141px;" width="10" height="8" viewBox="0 0 10 8"><rect x="0" y="0" width="10" height="1.5" fill="#aab1bd"/><polygon points="0.5,3.5 9.5,3.5 5,8" fill="#aab1bd"/></svg>
<div class="a" style="left:0px;top:133px;width:287px;height:1230px;background:#3b4453;"></div>
<div class="a" style="left:284.5px;top:153px;width:2px;height:1185px;background:#444d5d;"></div>
<div class="a" style="left:286.5px;top:134px;width:2px;height:1228px;background:#4f596b;"></div>
<div class="a" style="left:0px;top:134px;width:286.2px;height:18px;background:#212733;"></div>
<div class="a t " style="left:3px;top:134.5px;font-size:12.5px;">Properties</div>
<svg class="a" style="left:273px;top:138px;" width="11" height="11" viewBox="0 0 11 11"><path d="M1,1 L10,10 M10,1 L1,10" stroke="#c6cad2" stroke-width="1.7"/></svg>
<div class="a" style="left:2px;top:153px;width:282px;height:1182px;border:1px solid #424b5a;"></div>
<div class="a" style="left:7px;top:156px;width:69px;height:69px;border:1px solid #4c5566;"></div>
<svg class="a" style="left:26px;top:175px;" width="32" height="32" viewBox="0 0 32 32"><polygon points="0.5,17 15.5,0 30.5,17" fill="#e6e6e6"/><rect x="6.5" y="14.5" width="18" height="16" fill="none" stroke="#e6e6e6" stroke-width="1.6"/></svg>
<div class="a t " style="left:81px;top:175.0px;font-size:12.5px;">Elevation</div>
<div class="a t " style="left:81px;top:192.0px;font-size:12.5px;">Building Elevation</div>
<svg class="a" style="left:268px;top:190px;" width="9" height="5" viewBox="0 0 9 5"><polygon points="0,0 9,0 4.5,5" fill="#78828f"/></svg>
<div class="a t " style="left:6px;top:231.5px;font-size:12.5px;">Elevation: South</div>
<svg class="a" style="left:196px;top:236px;" width="9" height="6" viewBox="0 0 9 6"><path d="M1,1 L4.5,4.5 L8,1" stroke="#8a94a2" stroke-width="1.4" fill="none"/></svg>
<svg class="a" style="left:213px;top:233px;" width="12" height="12" viewBox="0 0 12 12"><rect x="0" y="0" width="5" height="3" fill="#dfe3e8"/><rect x="6.5" y="0" width="5" height="3" fill="#dfe3e8"/><rect x="0" y="4.5" width="5" height="3" fill="#dfe3e8"/><rect x="6.5" y="4.5" width="5" height="3" fill="#dfe3e8"/><rect x="0" y="9" width="5" height="3" fill="#dfe3e8"/><rect x="6.5" y="9" width="5" height="3" fill="#dfe3e8"/><rect x="2" y="0" width="1" height="12" fill="#3b4453"/><rect x="8.5" y="0" width="1" height="12" fill="#3b4453"/></svg>
<div class="a t " style="left:228px;top:231.5px;font-size:12.5px;">Edit Type</div>
<div class="a" style="left:2px;top:250.5px;width:208px;height:1.5px;background:#5b6577;"></div>
<div class="a" style="left:2px;top:255.6px;width:282px;height:19.6px;background:#212733;"></div>
<div class="a t b" style="left:4px;top:257.4px;font-size:12.5px;">Graphics</div>
<svg class="a" style="left:275.4px;top:258.2px;" width="4.6" height="6" viewBox="0 0 4.6 6"><path d="M0.5,2.6 L2.3,0.8 L4.1,2.6 M0.5,5.4 L2.3,3.6 L4.1,5.4" stroke="#eef0f3" stroke-width="1.2" fill="none"/></svg>
<div class="a" style="left:4px;top:297.4px;width:280px;height:1px;background:#434c5b;"></div>
<div class="a" style="left:136px;top:276.8px;width:1px;height:21.225px;background:#434c5b;"></div>
<div class="a" style="left:271px;top:276.8px;width:1px;height:21.225px;background:#3f4857;"></div>
<div class="a t " style="left:10.5px;top:279.22499999999997px;font-size:12.5px;">View Scale</div>
<div class="a" style="left:137px;top:277.2px;width:134.5px;height:20.6px;border:1.5px solid #8d96a4;"></div>
<div class="a t " style="left:143px;top:279.22499999999997px;font-size:12.5px;">1 : 100</div>
<div class="a" style="left:4px;top:318.7px;width:280px;height:1px;background:#434c5b;"></div>
<div class="a" style="left:136px;top:298.1px;width:1px;height:21.225px;background:#434c5b;"></div>
<div class="a" style="left:271px;top:298.1px;width:1px;height:21.225px;background:#3f4857;"></div>
<div class="a t d" style="left:10.5px;top:300.45px;font-size:12.5px;">Scale Value&nbsp;&nbsp;&nbsp; 1:</div>
<div class="a t d" style="left:139px;top:300.45px;font-size:12.5px;">100</div>
<div class="a" style="left:4px;top:339.9px;width:280px;height:1px;background:#434c5b;"></div>
<div class="a" style="left:136px;top:319.3px;width:1px;height:21.225px;background:#434c5b;"></div>
<div class="a" style="left:271px;top:319.3px;width:1px;height:21.225px;background:#3f4857;"></div>
<div class="a t " style="left:10.5px;top:321.67499999999995px;font-size:12.5px;">Display Model</div>
<div class="a t " style="left:139px;top:321.67499999999995px;font-size:12.5px;">Normal</div>
<div class="a" style="left:4px;top:361.1px;width:280px;height:1px;background:#434c5b;"></div>
<div class="a" style="left:136px;top:340.5px;width:1px;height:21.225px;background:#434c5b;"></div>
<div class="a" style="left:271px;top:340.5px;width:1px;height:21.225px;background:#3f4857;"></div>
<div class="a t " style="left:10.5px;top:342.9px;font-size:12.5px;">Detail Level</div>
<div class="a t " style="left:139px;top:342.9px;font-size:12.5px;">Fine</div>
<div class="a" style="left:4px;top:382.4px;width:280px;height:1px;background:#434c5b;"></div>
<div class="a" style="left:136px;top:361.7px;width:1px;height:21.225px;background:#434c5b;"></div>
<div class="a" style="left:271px;top:361.7px;width:1px;height:21.225px;background:#3f4857;"></div>
<div class="a t " style="left:10.5px;top:364.125px;font-size:12.5px;">Parts Visibility</div>
<div class="a t " style="left:139px;top:364.125px;font-size:12.5px;">Show Original</div>
<div class="a" style="left:4px;top:403.6px;width:280px;height:1px;background:#434c5b;"></div>
<div class="a" style="left:136px;top:382.9px;width:1px;height:21.225px;background:#434c5b;"></div>
<div class="a" style="left:271px;top:382.9px;width:1px;height:21.225px;background:#3f4857;"></div>
<div class="a t " style="left:10.5px;top:385.34999999999997px;font-size:12.5px;">Visibility/Graphics O<span style="letter-spacing:-0.6px">...</span></div>
<div class="a" style="left:138px;top:383.3px;width:131.8px;height:19.8px;border:1px solid #687285;"></div>
<div class="a t " style="left:4px;width:400px;text-align:center;top:385.95px;font-size:12.5px;">Edit<span style="letter-spacing:-0.6px">...</span></div>
<div class="a" style="left:4px;top:424.8px;width:280px;height:1px;background:#434c5b;"></div>
<div class="a" style="left:136px;top:404.2px;width:1px;height:21.225px;background:#434c5b;"></div>
<div class="a" style="left:271px;top:404.2px;width:1px;height:21.225px;background:#3f4857;"></div>
<div class="a t " style="left:10.5px;top:406.575px;font-size:12.5px;">Graphic Display Opti<span style="letter-spacing:-0.6px">...</span></div>
<div class="a" style="left:138px;top:404.6px;width:131.8px;height:19.8px;border:1px solid #687285;"></div>
<div class="a t " style="left:4px;width:400px;text-align:center;top:407.175px;font-size:12.5px;">Edit<span style="letter-spacing:-0.6px">...</span></div>
<div class="a" style="left:4px;top:446.0px;width:280px;height:1px;background:#434c5b;"></div>
<div class="a" style="left:136px;top:425.4px;width:1px;height:21.225px;background:#434c5b;"></div>
<div class="a" style="left:271px;top:425.4px;width:1px;height:21.225px;background:#3f4857;"></div>
<div class="a t " style="left:10.5px;top:427.79999999999995px;font-size:12.5px;letter-spacing:-0.25px;">Hide at scales coarse<span style="letter-spacing:-0.6px">...</span></div>
<div class="a t " style="left:139px;top:427.79999999999995px;font-size:12.5px;">&nbsp;1 : 5000</div>
<div class="a" style="left:4px;top:467.2px;width:280px;height:1px;background:#434c5b;"></div>
<div class="a" style="left:136px;top:446.6px;width:1px;height:21.225px;background:#434c5b;"></div>
<div class="a" style="left:271px;top:446.6px;width:1px;height:21.225px;background:#3f4857;"></div>
<div class="a t " style="left:10.5px;top:449.025px;font-size:12.5px;">Discipline</div>
<div class="a t " style="left:139px;top:449.025px;font-size:12.5px;">Architectural</div>
<div class="a" style="left:4px;top:488.5px;width:280px;height:1px;background:#434c5b;"></div>
<div class="a" style="left:136px;top:467.9px;width:1px;height:21.225px;background:#434c5b;"></div>
<div class="a" style="left:271px;top:467.9px;width:1px;height:21.225px;background:#3f4857;"></div>
<div class="a t " style="left:10.5px;top:470.25px;font-size:12.5px;">Show Hidden Lines</div>
<div class="a t " style="left:139px;top:470.25px;font-size:12.5px;">By Discipline</div>
<div class="a" style="left:4px;top:509.7px;width:280px;height:1px;background:#434c5b;"></div>
<div class="a" style="left:136px;top:489.1px;width:1px;height:21.225px;background:#434c5b;"></div>
<div class="a" style="left:271px;top:489.1px;width:1px;height:21.225px;background:#3f4857;"></div>
<div class="a t " style="left:10.5px;top:491.475px;font-size:12.5px;">Color Scheme Locati<span style="letter-spacing:-0.6px">...</span></div>
<div class="a t " style="left:139px;top:491.475px;font-size:12.5px;">Background</div>
<div class="a" style="left:4px;top:530.9px;width:280px;height:1px;background:#434c5b;"></div>
<div class="a" style="left:136px;top:510.3px;width:1px;height:21.225px;background:#434c5b;"></div>
<div class="a" style="left:271px;top:510.3px;width:1px;height:21.225px;background:#3f4857;"></div>
<div class="a t " style="left:10.5px;top:512.7px;font-size:12.5px;">Color Scheme</div>
<div class="a" style="left:138px;top:510.7px;width:131.8px;height:19.8px;border:1px solid #687285;"></div>
<div class="a t " style="left:4px;width:400px;text-align:center;top:513.3000000000001px;font-size:12.5px;">&lt;none&gt;</div>
<div class="a" style="left:4px;top:552.1px;width:280px;height:1px;background:#434c5b;"></div>
<div class="a" style="left:136px;top:531.5px;width:1px;height:21.225px;background:#434c5b;"></div>
<div class="a" style="left:271px;top:531.5px;width:1px;height:21.225px;background:#3f4857;"></div>
<div class="a t " style="left:10.5px;top:533.925px;font-size:12.5px;">Default Analysis Dis<span style="letter-spacing:-0.6px">...</span></div>
<div class="a t " style="left:139px;top:533.925px;font-size:12.5px;">None</div>
<div class="a" style="left:4px;top:573.4px;width:280px;height:1px;background:#434c5b;"></div>
<div class="a" style="left:136px;top:552.8px;width:1px;height:21.225px;background:#434c5b;"></div>
<div class="a" style="left:271px;top:552.8px;width:1px;height:21.225px;background:#3f4857;"></div>
<div class="a t " style="left:10.5px;top:555.15px;font-size:12.5px;">Sun Path</div>
<div class="a" style="left:140px;top:555.5px;width:13px;height:13px;border:1.2px solid #a9b1bd;"></div>
<div class="a" style="left:2px;top:574.0px;width:282px;height:19.6px;background:#212733;"></div>
<div class="a t b" style="left:4px;top:575.775px;font-size:12.5px;">Extents</div>
<svg class="a" style="left:275.4px;top:576.6px;" width="4.6" height="6" viewBox="0 0 4.6 6"><path d="M0.5,2.6 L2.3,0.8 L4.1,2.6 M0.5,5.4 L2.3,3.6 L4.1,5.4" stroke="#eef0f3" stroke-width="1.2" fill="none"/></svg>
<div class="a" style="left:4px;top:615.8px;width:280px;height:1px;background:#434c5b;"></div>
<div class="a" style="left:136px;top:595.2px;width:1px;height:21.225px;background:#434c5b;"></div>
<div class="a" style="left:271px;top:595.2px;width:1px;height:21.225px;background:#3f4857;"></div>
<div class="a t " style="left:10.5px;top:597.6px;font-size:12.5px;">Crop View</div>
<div class="a" style="left:140px;top:597.9px;width:13px;height:13px;border:1.2px solid #a9b1bd;"></div>
<div class="a" style="left:4px;top:637.1px;width:280px;height:1px;background:#434c5b;"></div>
<div class="a" style="left:136px;top:616.4px;width:1px;height:21.225px;background:#434c5b;"></div>
<div class="a" style="left:271px;top:616.4px;width:1px;height:21.225px;background:#3f4857;"></div>
<div class="a t " style="left:10.5px;top:618.825px;font-size:12.5px;">Crop Region Visible</div>
<div class="a" style="left:140px;top:619.1px;width:13px;height:13px;border:1.2px solid #a9b1bd;"></div>
<div class="a" style="left:4px;top:658.3px;width:280px;height:1px;background:#434c5b;"></div>
<div class="a" style="left:136px;top:637.6px;width:1px;height:21.225px;background:#434c5b;"></div>
<div class="a" style="left:271px;top:637.6px;width:1px;height:21.225px;background:#3f4857;"></div>
<div class="a t " style="left:10.5px;top:640.05px;font-size:12.5px;">Annotation Crop</div>
<div class="a" style="left:140px;top:640.4px;width:13px;height:13px;border:1.2px solid #a9b1bd;"></div>
<div class="a" style="left:4px;top:679.5px;width:280px;height:1px;background:#434c5b;"></div>
<div class="a" style="left:136px;top:658.9px;width:1px;height:21.225px;background:#434c5b;"></div>
<div class="a" style="left:271px;top:658.9px;width:1px;height:21.225px;background:#3f4857;"></div>
<div class="a t " style="left:10.5px;top:661.275px;font-size:12.5px;">Far Clipping</div>
<div class="a" style="left:138px;top:659.3px;width:131.8px;height:19.8px;border:1px solid #687285;"></div>
<div class="a t " style="left:4px;width:400px;text-align:center;top:661.875px;font-size:12.5px;">No clip</div>
<div class="a" style="left:4px;top:700.7px;width:280px;height:1px;background:#434c5b;"></div>
<div class="a" style="left:136px;top:680.1px;width:1px;height:21.225px;background:#434c5b;"></div>
<div class="a" style="left:271px;top:680.1px;width:1px;height:21.225px;background:#3f4857;"></div>
<div class="a t d" style="left:10.5px;top:682.5px;font-size:12.5px;">Far Clip Offset</div>
<div class="a t d" style="left:139px;top:682.5px;font-size:12.5px;">29.4649 m</div>
<div class="a" style="left:4px;top:722.0px;width:280px;height:1px;background:#434c5b;"></div>
<div class="a" style="left:136px;top:701.3px;width:1px;height:21.225px;background:#434c5b;"></div>
<div class="a" style="left:271px;top:701.3px;width:1px;height:21.225px;background:#3f4857;"></div>
<div class="a t " style="left:10.5px;top:703.725px;font-size:12.5px;">Scope Box</div>
<div class="a t " style="left:139px;top:703.725px;font-size:12.5px;">None</div>
<div class="a" style="left:4px;top:743.2px;width:280px;height:1px;background:#434c5b;"></div>
<div class="a" style="left:136px;top:722.6px;width:1px;height:21.225px;background:#434c5b;"></div>
<div class="a" style="left:271px;top:722.6px;width:1px;height:21.225px;background:#3f4857;"></div>
<div class="a t " style="left:10.5px;top:724.95px;font-size:12.5px;">Associated Datum</div>
<div class="a t " style="left:139px;top:724.95px;font-size:12.5px;">None</div>
<div class="a" style="left:2px;top:743.8px;width:282px;height:19.6px;background:#212733;"></div>
<div class="a t b" style="left:4px;top:745.5749999999999px;font-size:12.5px;">Identity Data</div>
<svg class="a" style="left:275.4px;top:746.4px;" width="4.6" height="6" viewBox="0 0 4.6 6"><path d="M0.5,2.6 L2.3,0.8 L4.1,2.6 M0.5,5.4 L2.3,3.6 L4.1,5.4" stroke="#eef0f3" stroke-width="1.2" fill="none"/></svg>
<div class="a" style="left:4px;top:785.6px;width:280px;height:1px;background:#434c5b;"></div>
<div class="a" style="left:136px;top:765.0px;width:1px;height:21.225px;background:#434c5b;"></div>
<div class="a" style="left:271px;top:765.0px;width:1px;height:21.225px;background:#3f4857;"></div>
<div class="a t " style="left:10.5px;top:767.4px;font-size:12.5px;">View Template</div>
<div class="a" style="left:138px;top:765.4px;width:131.8px;height:19.8px;border:1px solid #687285;"></div>
<div class="a t " style="left:4px;width:400px;text-align:center;top:768.0px;font-size:12.5px;">&lt;None&gt;</div>
<div class="a" style="left:4px;top:806.9px;width:280px;height:1px;background:#434c5b;"></div>
<div class="a" style="left:136px;top:786.2px;width:1px;height:21.225px;background:#434c5b;"></div>
<div class="a" style="left:271px;top:786.2px;width:1px;height:21.225px;background:#3f4857;"></div>
<div class="a t " style="left:10.5px;top:788.625px;font-size:12.5px;">View Name</div>
<div class="a t " style="left:139px;top:788.625px;font-size:12.5px;">South</div>
<div class="a" style="left:4px;top:828.1px;width:280px;height:1px;background:#434c5b;"></div>
<div class="a" style="left:136px;top:807.5px;width:1px;height:21.225px;background:#434c5b;"></div>
<div class="a" style="left:271px;top:807.5px;width:1px;height:21.225px;background:#3f4857;"></div>
<div class="a t d" style="left:10.5px;top:809.85px;font-size:12.5px;">Dependency</div>
<div class="a t d" style="left:139px;top:809.85px;font-size:12.5px;">Independent</div>
<div class="a" style="left:4px;top:849.3px;width:280px;height:1px;background:#434c5b;"></div>
<div class="a" style="left:136px;top:828.7px;width:1px;height:21.225px;background:#434c5b;"></div>
<div class="a" style="left:271px;top:828.7px;width:1px;height:21.225px;background:#3f4857;"></div>
<div class="a t " style="left:10.5px;top:831.075px;font-size:12.5px;">Title on Sheet</div>
<div class="a t " style="left:139px;top:831.075px;font-size:12.5px;"></div>
<div class="a" style="left:4px;top:870.5px;width:280px;height:1px;background:#434c5b;"></div>
<div class="a" style="left:136px;top:849.9px;width:1px;height:21.225px;background:#434c5b;"></div>
<div class="a" style="left:271px;top:849.9px;width:1px;height:21.225px;background:#3f4857;"></div>
<div class="a t d" style="left:10.5px;top:852.3000000000001px;font-size:12.5px;">Referencing Sheet C<span style="letter-spacing:-0.6px">...</span></div>
<div class="a t d" style="left:139px;top:852.3000000000001px;font-size:12.5px;">&lt;None&gt;</div>
<div class="a" style="left:4px;top:891.8px;width:280px;height:1px;background:#434c5b;"></div>
<div class="a" style="left:136px;top:871.1px;width:1px;height:21.225px;background:#434c5b;"></div>
<div class="a" style="left:271px;top:871.1px;width:1px;height:21.225px;background:#3f4857;"></div>
<div class="a t d" style="left:10.5px;top:873.5250000000001px;font-size:12.5px;">Referencing Sheet</div>
<div class="a t d" style="left:139px;top:873.5250000000001px;font-size:12.5px;"></div>
<div class="a" style="left:4px;top:913.0px;width:280px;height:1px;background:#434c5b;"></div>
<div class="a" style="left:136px;top:892.4px;width:1px;height:21.225px;background:#434c5b;"></div>
<div class="a" style="left:271px;top:892.4px;width:1px;height:21.225px;background:#3f4857;"></div>
<div class="a t d" style="left:10.5px;top:894.75px;font-size:12.5px;">Referencing Detail</div>
<div class="a t d" style="left:139px;top:894.75px;font-size:12.5px;"></div>
<div class="a" style="left:2px;top:913.6px;width:282px;height:19.6px;background:#212733;"></div>
<div class="a t b" style="left:4px;top:915.375px;font-size:12.5px;">Phasing</div>
<svg class="a" style="left:275.4px;top:916.2px;" width="4.6" height="6" viewBox="0 0 4.6 6"><path d="M0.5,2.6 L2.3,0.8 L4.1,2.6 M0.5,5.4 L2.3,3.6 L4.1,5.4" stroke="#eef0f3" stroke-width="1.2" fill="none"/></svg>
<div class="a" style="left:4px;top:955.4px;width:280px;height:1px;background:#434c5b;"></div>
<div class="a" style="left:136px;top:934.8px;width:1px;height:21.225px;background:#434c5b;"></div>
<div class="a" style="left:271px;top:934.8px;width:1px;height:21.225px;background:#3f4857;"></div>
<div class="a t " style="left:10.5px;top:937.2px;font-size:12.5px;">Phase Filter</div>
<div class="a t " style="left:139px;top:937.2px;font-size:12.5px;">Show All</div>
<div class="a" style="left:4px;top:976.7px;width:280px;height:1px;background:#434c5b;"></div>
<div class="a" style="left:136px;top:956.0px;width:1px;height:21.225px;background:#434c5b;"></div>
<div class="a" style="left:271px;top:956.0px;width:1px;height:21.225px;background:#3f4857;"></div>
<div class="a t " style="left:10.5px;top:958.4250000000001px;font-size:12.5px;">Phase</div>
<div class="a t " style="left:139px;top:958.4250000000001px;font-size:12.5px;">New Construction</div>
<div class="a" style="left:2px;top:977.3px;width:282px;height:19.6px;background:#212733;"></div>
<div class="a t b" style="left:4px;top:979.0500000000001px;font-size:12.5px;">View to Sheet Positioning</div>
<svg class="a" style="left:275.4px;top:979.9px;" width="4.6" height="6" viewBox="0 0 4.6 6"><path d="M0.5,2.6 L2.3,0.8 L4.1,2.6 M0.5,5.4 L2.3,3.6 L4.1,5.4" stroke="#eef0f3" stroke-width="1.2" fill="none"/></svg>
<div class="a" style="left:4px;top:1019.1px;width:280px;height:1px;background:#434c5b;"></div>
<div class="a" style="left:136px;top:998.5px;width:1px;height:21.225px;background:#434c5b;"></div>
<div class="a" style="left:271px;top:998.5px;width:1px;height:21.225px;background:#3f4857;"></div>
<div class="a t " style="left:10.5px;top:1000.875px;font-size:12.5px;">Saved Position</div>
<div class="a t " style="left:139px;top:1000.875px;font-size:12.5px;">&lt;None&gt;</div>
<div class="a" style="left:4px;top:1040.3px;width:280px;height:1px;background:#434c5b;"></div>
<div class="a" style="left:136px;top:1019.7px;width:1px;height:21.225px;background:#434c5b;"></div>
<div class="a" style="left:271px;top:1019.7px;width:1px;height:21.225px;background:#3f4857;"></div>
<div class="a t d" style="left:10.5px;top:1022.1000000000001px;font-size:12.5px;">View Anchor</div>
<div class="a t d" style="left:139px;top:1022.1000000000001px;font-size:12.5px;"></div>
<div class="a" style="left:4px;top:1061.5px;width:280px;height:1px;background:#434c5b;"></div>
<div class="a" style="left:136px;top:1040.9px;width:1px;height:21.225px;background:#434c5b;"></div>
<div class="a" style="left:271px;top:1040.9px;width:1px;height:21.225px;background:#3f4857;"></div>
<div class="a t d" style="left:10.5px;top:1043.325px;font-size:12.5px;">View Position X</div>
<div class="a t d" style="left:139px;top:1043.325px;font-size:12.5px;"></div>
<div class="a" style="left:4px;top:1082.8px;width:280px;height:1px;background:#434c5b;"></div>
<div class="a" style="left:136px;top:1062.2px;width:1px;height:21.225px;background:#434c5b;"></div>
<div class="a" style="left:271px;top:1062.2px;width:1px;height:21.225px;background:#3f4857;"></div>
<div class="a t d" style="left:10.5px;top:1064.5500000000002px;font-size:12.5px;">View Position Y</div>
<div class="a t d" style="left:139px;top:1064.5500000000002px;font-size:12.5px;"></div>
<div class="a" style="left:0px;top:1337.4px;width:286.2px;height:24.5px;background:#363e4c;"></div>
<div class="a" style="left:2px;top:1339px;width:24px;height:23px;background:#3f87b5;"></div>
<svg class="a" style="left:5px;top:1342px;" width="18" height="17" viewBox="0 0 18 17"><path d="M1,3 L11,3 M1,8.5 L9,8.5 M1,14 L11,14" stroke="#d9ecf8" stroke-width="1.5"/><polygon points="15,0.5 17.5,4 12.5,4" fill="#fff"/><polygon points="15,16.5 17.5,13 12.5,13" fill="#fff"/><rect x="14.4" y="3" width="1.2" height="11" fill="#fff"/></svg>
<svg class="a" style="left:32px;top:1341px" width="20" height="19" viewBox="0 0 20 19"><text x="0" y="8" font-family="Liberation Sans,sans-serif" font-size="8.5" font-weight="bold" fill="#6aaee6">A</text><text x="0" y="17" font-family="Liberation Sans,sans-serif" font-size="8.5" font-weight="bold" fill="#e4e7eb">Z</text><rect x="11" y="1" width="1.5" height="14" fill="#e4e7eb"/><polygon points="8.8,13.5 14.7,13.5 11.75,18" fill="#e4e7eb"/></svg>
<svg class="a" style="left:57px;top:1341px" width="20" height="19" viewBox="0 0 20 19"><text x="0" y="8" font-family="Liberation Sans,sans-serif" font-size="8.5" font-weight="bold" fill="#e4e7eb">Z</text><text x="0" y="17" font-family="Liberation Sans,sans-serif" font-size="8.5" font-weight="bold" fill="#6aaee6">A</text><rect x="11" y="1" width="1.5" height="14" fill="#e4e7eb"/><polygon points="8.8,13.5 14.7,13.5 11.75,18" fill="#e4e7eb"/></svg>
<div class="a" style="left:206px;top:1339.3px;width:76px;height:19.6px;background:#2f3644;border:1px solid #485162;"></div>
<div class="a t d" style="left:44px;width:400px;text-align:center;top:1341.6px;font-size:12.5px;font-size:13.5px;">Apply</div>
<div class="a" style="left:288.5px;top:155px;width:2271.5px;height:1188px;background:#222933;"></div>
<div class="a" style="left:2540px;top:155px;width:18px;height:1188px;background:#323a47;"></div>
<div class="a" style="left:2558px;top:155px;width:2px;height:1188px;background:#2a303b;"></div>
<div class="a" style="left:2544.5px;top:740px;width:8.5px;height:19px;background:#7d8da5;border-radius:4.5px;"></div>
<svg class="a" style="left:2543px;top:160px;" width="12" height="8" viewBox="0 0 12 8"><path d="M1.5,6.5 L6,2 L10.5,6.5" stroke="#aeb6c2" stroke-width="1.8" fill="none"/></svg>
<div class="a" style="left:2541px;top:171px;width:16px;height:1px;background:#444d5c;"></div>
<svg class="a" style="left:2543px;top:1330px;" width="12" height="8" viewBox="0 0 12 8"><path d="M1.5,1.5 L6,6 L10.5,1.5" stroke="#aeb6c2" stroke-width="1.8" fill="none"/></svg>
<div class="a" style="left:288.5px;top:1343px;width:2271.5px;height:19px;background:#323a47;"></div>
<div class="a" style="left:288.5px;top:1343px;width:398px;height:18px;background:#394150;"></div>
<div class="a" style="left:0px;top:1361.3px;width:2560px;height:2.2px;background:#252b35;"></div>
<div class="a" style="left:0px;top:1363.5px;width:2560px;height:7.5px;background:#3b4453;"></div>
<div class="a" style="left:1595px;top:1347px;width:19.5px;height:9px;background:#7d8da5;border-radius:4.5px;"></div>
<svg class="a" style="left:2527px;top:1346px;" width="8" height="12" viewBox="0 0 8 12"><path d="M1.5,1.5 L6,6 L1.5,10.5" stroke="#aeb6c2" stroke-width="1.8" fill="none"/></svg>
<svg class="a" style="left:2546px;top:1350px;" width="10" height="10" viewBox="0 0 10 10"><rect x="6" y="0" width="2" height="2" fill="#8b94a2"/><rect x="2" y="4" width="2" height="2" fill="#8b94a2"/><rect x="6" y="4" width="2" height="2" fill="#8b94a2"/></svg>
<div class="a t " style="left:315px;top:1344.0px;font-size:13px;">1 : 100</div>
<svg class="a" style="left:0;top:0" width="2560" height="1371" viewBox="0 0 2560 1371"><defs><pattern id="brick" width="6" height="4" patternUnits="userSpaceOnUse"><rect width="6" height="4" fill="#896649"/><rect width="6" height="0.8" y="0" fill="#967354"/><rect width="6" height="0.8" y="2" fill="#967354"/><rect x="0" y="0" width="0.8" height="2" fill="#967354"/><rect x="3" y="2" width="0.8" height="2" fill="#967354"/></pattern></defs><path d="M301,764.4 L633,764.4 M301,847.4 L633,847.4" stroke="#a8adb5" stroke-width="1.3"/><path d="M296,687.9 L1875,687.9" stroke="#8f949d" stroke-width="1.5" stroke-dasharray="66.5 16.5 33.5 16.5" fill="none"/><path d="M1892,687.9 L1940,687.9" stroke="#8f949d" stroke-width="1.5"/><path d="M1952.5,687.5 L1952.5,673.9 A13.6,13.6 0 0 0 1938.9,687.5 Z M1952.5,687.5 L1952.5,701.1 A13.6,13.6 0 0 0 1966.1,687.5 Z" fill="#7fb4e6"/><circle cx="1952.5" cy="687.5" r="13.6" fill="none" stroke="#35597c" stroke-width="1"/><rect x="649.5" y="764.2" width="660.5" height="83.2" fill="url(#brick)" stroke="#e2d8ce" stroke-width="1.1"/><path d="M921.3,764 L921.3,847.4" stroke="#e2d8ce" stroke-width="1.2"/><rect x="716.9" y="776.4" width="46.10000000000002" height="31.600000000000023" fill="#fdfaf6"/><rect x="720.1" y="780.0" width="39.700000000000024" height="24.400000000000023" fill="#e1e9e7"/><rect x="853" y="776.4" width="45.799999999999955" height="31.600000000000023" fill="#fdfaf6"/><rect x="856.2" y="780.0" width="39.399999999999956" height="24.400000000000023" fill="#e1e9e7"/><rect x="1099" y="776.6" width="46" height="41.39999999999998" fill="#fdfaf6"/><rect x="1102.2" y="780.2" width="39.6" height="34.199999999999974" fill="#e1e9e7"/><rect x="1037.4" y="776.2" width="26.09999999999991" height="70.79999999999995" fill="#f5e6ca"/><rect x="1038.4" y="777.2" width="24.09999999999991" height="69.79999999999995" fill="none" stroke="#fffaf0" stroke-width="0.8"/><rect x="1040.6000000000001" y="779.4000000000001" width="19.69999999999991" height="67.59999999999995" fill="#7f5a30"/><rect x="1045" y="783.6" width="11.400000000000091" height="30.199999999999932" fill="#0a0af0" stroke="#f3ecfa" stroke-width="1.5"/><rect x="1045" y="821.6" width="11.400000000000091" height="19.0" fill="#0a0af0" stroke="#f3ecfa" stroke-width="1.5"/><path d="M1047.2,791.7 L1053.7,799.7" stroke="#c9d2ff" stroke-width="0.8"/><path d="M1056.3,807.8 Q1060.8,812.8 1056.3,817.8" stroke="#f5e6ca" stroke-width="0.7" fill="none"/><rect x="1042.1000000000001" y="816.0999999999999" width="4.5" height="1.2" fill="#f2a0c0"/><path d="M1054.7,825.1 L1047.2,836.1" stroke="#c9d2ff" stroke-width="0.8"/><path d="M1285.4,763.8 L1285.4,750.1999999999999 A13.6,13.6 0 0 0 1271.8000000000002,763.8 Z M1285.4,763.8 L1285.4,777.4 A13.6,13.6 0 0 0 1299.0,763.8 Z" fill="#7fb4e6"/><circle cx="1285.4" cy="763.8" r="13.6" fill="none" stroke="#35597c" stroke-width="1"/><path d="M1285.4,847.2 L1285.4,833.6 A13.6,13.6 0 0 0 1271.8000000000002,847.2 Z M1285.4,847.2 L1285.4,860.8000000000001 A13.6,13.6 0 0 0 1299.0,847.2 Z" fill="#7fb4e6"/><circle cx="1285.4" cy="847.2" r="13.6" fill="none" stroke="#35597c" stroke-width="1"/><rect x="647" y="805.6" width="2.5" height="2.5" fill="#fff"/><rect x="919.5" y="815" width="2.5" height="2.5" fill="#fff"/><rect x="1309.5" y="815" width="2.5" height="2.5" fill="#fff"/><rect x="2088.5" y="687.6" width="258" height="77" fill="url(#brick)" stroke="#e2d8ce" stroke-width="1.1"/><rect x="1815.2" y="764.2" width="662" height="83.2" fill="url(#brick)" stroke="#e2d8ce" stroke-width="1.2"/><rect x="1815" y="762.5" width="11" height="1.6" fill="#e2d8ce"/><rect x="2134.2" y="776.8" width="31.200000000000273" height="40.80000000000007" fill="#fdfaf6"/><rect x="2137.3999999999996" y="780.4" width="24.800000000000274" height="33.600000000000065" fill="#e1e9e7"/><rect x="2268.6" y="776.8" width="30.40000000000009" height="40.80000000000007" fill="#fdfaf6"/><rect x="2271.7999999999997" y="780.4" width="24.000000000000092" height="33.600000000000065" fill="#e1e9e7"/><rect x="2057.1" y="776.2" width="29.90000000000009" height="70.79999999999995" fill="#f5e6ca"/><rect x="2058.1" y="777.2" width="27.90000000000009" height="69.79999999999995" fill="none" stroke="#fffaf0" stroke-width="0.8"/><rect x="2060.2999999999997" y="779.4000000000001" width="23.500000000000092" height="67.59999999999995" fill="#7f5a30"/><rect x="2064.6" y="783.4" width="15.0" height="30.5" fill="#0a0af0" stroke="#f3ecfa" stroke-width="1.5"/><rect x="2064.6" y="821" width="15.0" height="19.200000000000045" fill="#0a0af0" stroke="#f3ecfa" stroke-width="1.5"/><path d="M2068.6,791.65 L2075.1,799.65" stroke="#c9d2ff" stroke-width="0.8"/><path d="M2079.8,807.9 Q2084.3,812.9 2079.8,817.9" stroke="#f5e6ca" stroke-width="0.7" fill="none"/><rect x="2061.7999999999997" y="816.1999999999999" width="4.5" height="1.2" fill="#f2a0c0"/><path d="M2076.1,824.6 L2068.6,835.6" stroke="#c9d2ff" stroke-width="0.8"/><rect x="2204" y="776.2" width="26.90000000000009" height="70.79999999999995" fill="#f5e6ca"/><rect x="2205" y="777.2" width="24.90000000000009" height="69.79999999999995" fill="none" stroke="#fffaf0" stroke-width="0.8"/><rect x="2207.2" y="779.4000000000001" width="20.500000000000092" height="67.59999999999995" fill="#7f5a30"/><rect x="2211.9" y="783.7" width="11.799999999999727" height="30.199999999999932" fill="#0a0af0" stroke="#f3ecfa" stroke-width="1.5"/><rect x="2211.9" y="822.4" width="11.799999999999727" height="18.399999999999977" fill="#0a0af0" stroke="#f3ecfa" stroke-width="1.5"/><path d="M2214.3,791.8 L2220.8,799.8" stroke="#c9d2ff" stroke-width="0.8"/><path d="M2223.7000000000003,807.9 Q2228.2000000000003,812.9 2223.7000000000003,817.9" stroke="#f5e6ca" stroke-width="0.7" fill="none"/><rect x="2208.7" y="816.1999999999999" width="4.5" height="1.2" fill="#f2a0c0"/><path d="M2221.8,825.5999999999999 L2214.3,836.5999999999999" stroke="#c9d2ff" stroke-width="0.8"/><path d="M2300.4,688 L2300.4,764 M2336.5,688 L2336.5,764" stroke="#e2d8ce" stroke-width="1"/><rect x="2303.5" y="692" width="29.5" height="72" fill="#f5e6ca"/><rect x="2304.5" y="693" width="27.5" height="71" fill="none" stroke="#fffaf0" stroke-width="0.8"/><rect x="2306.7" y="695.2" width="23.1" height="68.8" fill="#7f5a30"/><rect x="2311" y="699.9" width="15" height="26.5" fill="#0a0af0" stroke="#f3ecfa" stroke-width="1.5"/><rect x="2311" y="738" width="15" height="18.799999999999955" fill="#0a0af0" stroke="#f3ecfa" stroke-width="1.5"/><path d="M2315.0,706.15 L2321.5,714.15" stroke="#c9d2ff" stroke-width="0.8"/><path d="M2325.8,720.4 Q2330.3,725.4 2325.8,730.4" stroke="#f5e6ca" stroke-width="0.7" fill="none"/><rect x="2308.2" y="728.6999999999999" width="4.5" height="1.2" fill="#f2a0c0"/><path d="M2311,738 L2326,756.8 M2326,738 L2311,756.8" stroke="#d6dcff" stroke-width="0.9"/><polygon points="2181,842.1 2299,765.3 2301,765.3 2301,775.5 2190.8,847.4 2181,847.4" fill="#7f7f7f"/><polygon points="2336.6,765.3 2338.6,765.3 2458,842.1 2458,847.4 2450.8,847.4 2336.6,775.5" fill="#7f7f7f"/><rect x="2301" y="764.3" width="35.6" height="11.2" fill="#888888"/><rect x="2302.8" y="775.5" width="3.2" height="71.5" fill="#fdfaf6"/><rect x="2332.2" y="775.5" width="3.4" height="71.5" fill="#fdfaf6"/><path d="M2181.0,803.4 L2181.0,842.1 M2181.0,806.4 L2205.0,826.7 M2181.0,842.1 L2205.0,791.3 M2181.0,826.8 L2205.0,811.5 M2181.0,841.1 L2205.0,825.7 M2205.0,788.3 L2205.0,826.7 M2205.0,791.3 L2229.0,811.4 M2205.0,826.7 L2229.0,776.2 M2205.0,811.5 L2229.0,796.3 M2205.0,825.7 L2229.0,810.4 M2229.0,773.2 L2229.0,811.4 M2229.0,776.2 L2253.1,796.0 M2229.0,811.4 L2253.1,761.1 M2229.0,796.3 L2253.1,781.1 M2229.0,810.4 L2253.1,795.0 M2253.1,758.1 L2253.1,796.0 M2253.1,761.1 L2277.1,780.7 M2253.1,796.0 L2277.1,746.0 M2253.1,781.1 L2277.1,765.8 M2253.1,795.0 L2277.1,779.7 M2277.1,743.0 L2277.1,780.7 M2277.1,746.0 L2301.1,765.3 M2277.1,780.7 L2301.1,730.9 M2277.1,765.8 L2301.1,750.6 M2277.1,779.7 L2301.1,764.3 M2301.1,727.9 L2301.1,765.3 " stroke="#f2ece4" stroke-width="0.9" fill="none"/><path d="M2457.3,803.4 L2457.3,842.1 M2457.3,806.4 L2433.2,826.7 M2457.3,842.1 L2433.2,791.3 M2457.3,826.8 L2433.2,811.5 M2457.3,841.1 L2433.2,825.7 M2433.2,788.3 L2433.2,826.7 M2433.2,791.3 L2409.0,811.4 M2433.2,826.7 L2409.0,776.2 M2433.2,811.5 L2409.0,796.3 M2433.2,825.7 L2409.0,810.4 M2409.0,773.2 L2409.0,811.4 M2409.0,776.2 L2384.9,796.0 M2409.0,811.4 L2384.9,761.1 M2409.0,796.3 L2384.9,781.1 M2409.0,810.4 L2384.9,795.0 M2384.9,758.1 L2384.9,796.0 M2384.9,761.1 L2360.7,780.7 M2384.9,796.0 L2360.7,746.0 M2384.9,781.1 L2360.7,765.8 M2384.9,795.0 L2360.7,779.7 M2360.7,743.0 L2360.7,780.7 M2360.7,746.0 L2336.6,765.3 M2360.7,780.7 L2336.6,730.9 M2360.7,765.8 L2336.6,750.6 M2360.7,779.7 L2336.6,764.3 M2336.6,727.9 L2336.6,765.3 " stroke="#f2ece4" stroke-width="0.9" fill="none"/><path d="M2181,803.4 L2301.1,727.9 L2336.6,727.9 L2457.3,803.4" stroke="#f7f3ee" stroke-width="2.6" fill="none" stroke-linejoin="round"/><path d="M2296,733 L2342,733" stroke="#f2ece4" stroke-width="1.6" fill="none"/><path d="M2301.1,727.9 L2301.1,764 M2336.6,727.9 L2336.6,764" stroke="#f2ece4" stroke-width="1.2" fill="none"/><rect x="2347.6" y="716.2" width="8.6" height="29.4" fill="#dfe6ee"/><rect x="2349.3999999999996" y="718.5" width="0.9" height="25" fill="#8e9aa8"/><rect x="2351.7999999999997" y="718.5" width="0.9" height="25" fill="#8e9aa8"/><rect x="2353.7999999999997" y="718.5" width="0.9" height="25" fill="#8e9aa8"/><path d="M2356.2,720.5 Q2363.7,734 2356.2,744" stroke="#eef1f5" stroke-width="1.2" fill="none"/><path d="M2356.2,717 L2359.2,718.6 L2357.2,720.5" stroke="#eef1f5" stroke-width="1" fill="none"/><rect x="2079.4" y="716.2" width="8.6" height="29.4" fill="#dfe6ee"/><rect x="2085.4" y="718.5" width="0.9" height="25" fill="#8e9aa8"/><rect x="2083.0" y="718.5" width="0.9" height="25" fill="#8e9aa8"/><rect x="2081.0" y="718.5" width="0.9" height="25" fill="#8e9aa8"/><path d="M2079.4,720.5 Q2071.9,734 2079.4,744" stroke="#eef1f5" stroke-width="1.2" fill="none"/><path d="M2079.4,717 L2076.4,718.6 L2078.4,720.5" stroke="#eef1f5" stroke-width="1" fill="none"/><path d="M2068.8,655 L2068.8,891" stroke="#b4bac3" stroke-width="1.2"/><rect x="2068" y="888" width="31" height="6.5" fill="#d6d6d6"/><polygon points="2068.8,598.4 2097,626.8 2068.8,654.8" fill="#8cc2f4" stroke="#0f2a4d" stroke-width="1.2"/><circle cx="2068.3" cy="627" r="19.4" fill="#222933" stroke="#7d9cc0" stroke-width="1"/><path d="M2049,627.2 L2087.6,627.2" stroke="#6f8cae" stroke-width="1"/><rect x="2067.6" y="617.4" width="2.2" height="1" fill="#66727f"/><rect x="2064" y="634.4" width="9.5" height="1.2" fill="#66727f"/><rect x="2071" y="847.9" width="2.8" height="3" fill="#dcdcdc"/></svg>
<div class="a t " style="left:859.5px;width:400px;text-align:right;top:744.5px;font-size:13px;font-size:14px;color:#f0f0f0;">1st Floor</div>
<div class="a" style="left:1224px;top:768.4px;width:36px;height:16.2px;background:#222933;"></div>
<div class="a t " style="left:859.5px;width:400px;text-align:right;top:768.5px;font-size:13px;font-size:14px;color:#f0f0f0;">2.5 m</div>
<div class="a" style="left:1176px;top:828.3px;width:84px;height:15.6px;background:#222933;"></div>
<div class="a t " style="left:859.5px;width:400px;text-align:right;top:828.3px;font-size:13px;font-size:14px;color:#f0f0f0;">Ground Floor</div>
<div class="a t " style="left:859.5px;width:400px;text-align:right;top:851.5px;font-size:13px;font-size:14px;color:#f0f0f0;">0 m</div>
<div class="a t " style="left:1711px;width:400px;text-align:center;top:668.5px;font-size:13px;font-size:14px;color:#f0f0f0;">Roof</div>
<div class="a t " style="left:1708px;width:400px;text-align:center;top:692.0px;font-size:13px;font-size:14px;color:#f0f0f0;">4.8 m</div>
<div class="a" style="left:304px;top:714px;width:286.5px;height:612.3px;background:#343c4a;border-radius:5.5px;border:1px solid #464f5f;box-shadow:0 3px 14px 2px rgba(0,0,0,0.55);"></div>
<div class="a" style="left:307.5px;top:759.8px;width:281px;height:563.7px;background:#3b4453;"></div>
<div class="a" style="left:305px;top:715px;width:284.5px;height:19.2px;background:#222834;border-radius:4.5px 4.5px 0 0;"></div>
<div class="a" style="left:305px;top:734.2px;width:284.5px;height:25.6px;background:#1a1f29;"></div>
<div class="a t " style="left:307.5px;top:716.0px;font-size:12.5px;">Project Browser - 2 Old maidstone Rd, DA14<span style="letter-spacing:-0.6px">...</span></div>
<svg class="a" style="left:576.5px;top:719.5px;" width="10" height="10" viewBox="0 0 10 10"><path d="M0.8,0.8 L9.2,9.2 M9.2,0.8 L0.8,9.2" stroke="#d3d7dd" stroke-width="1.7"/></svg>
<div class="a" style="left:307.5px;top:734.2px;width:25.6px;height:25.6px;background:#3b4453;"></div>
<svg class="a" style="left:312.6px;top:738.6px;" width="18" height="17" viewBox="0 0 18 17"><polygon points="0,9 9,0 18,9 15.5,9 15.5,17 2.5,17 2.5,9" fill="#e8e8e8"/><rect x="6.5" y="11" width="4" height="6" fill="#3b4453"/><rect x="12" y="10" width="6" height="2" fill="#6aaee6"/><rect x="12" y="13.5" width="6" height="2" fill="#6aaee6"/></svg>
<svg class="a" style="left:338.05px;top:738.6px;" width="18" height="17" viewBox="0 0 18 17"><path d="M4,1 L1,1 L1,5 M13,1 L16,1 L16,5 M1,12 L1,16 L4,16 M16,12 L16,16 L13,16" stroke="#e8e8e8" stroke-width="1.6" fill="none"/><polygon points="4,7 7,4 13,4 13,10 10,13 4,13" fill="#e8e8e8"/></svg>
<svg class="a" style="left:363.5px;top:738.6px;" width="18" height="17" viewBox="0 0 18 17"><rect x="0" y="0" width="18" height="17" fill="#e8e8e8"/><rect x="0" y="0" width="18" height="3" fill="#bdbdbd"/><rect x="2.5" y="5.5" width="4" height="4" fill="none" stroke="#3b4453" stroke-width="1"/><rect x="2.5" y="11" width="4" height="4" fill="none" stroke="#3b4453" stroke-width="1"/><path d="M8.5,6.5 L15.5,6.5 M8.5,9 L15.5,9 M8.5,12 L15.5,12 M8.5,14.5 L15.5,14.5" stroke="#3b4453" stroke-width="1"/></svg>
<svg class="a" style="left:388.95000000000005px;top:738.6px;" width="18" height="17" viewBox="0 0 18 17"><rect x="0" y="1" width="18" height="14" fill="#e8e8e8"/><path d="M0,5 L18,5 M0,8.5 L18,8.5 M0,12 L18,12 M5,5 L5,15 M11.5,5 L11.5,15" stroke="#212733" stroke-width="1"/></svg>
<svg class="a" style="left:414.40000000000003px;top:738.6px;" width="18" height="17" viewBox="0 0 18 17"><polygon points="0,5 7,0 14,10 17,10 17,16 0,16" fill="#e8e8e8"/><circle cx="12.5" cy="12" r="3" fill="#e8e8e8" stroke="#212733" stroke-width="1"/><path d="M7,0 L13,9" stroke="#212733" stroke-width="0.8"/></svg>
<svg class="a" style="left:439.85px;top:738.6px;" width="18" height="17" viewBox="0 0 18 17"><rect x="0.5" y="0.5" width="6.5" height="6.5" fill="#e4e4e4"/><polygon points="9,0.5 15.5,0.5 15.5,15 0.5,15 0.5,9 9,9" fill="#e4e4e4"/></svg>
<svg class="a" style="left:465.3px;top:738.6px;" width="18" height="17" viewBox="0 0 18 17"><path d="M4,1 L1,1 L1,16 L4,16 M14,1 L17,1 L17,16 L14,16" stroke="#e8e8e8" stroke-width="1.6" fill="none"/><circle cx="7.5" cy="6.5" r="4" fill="#e8e8e8"/><rect x="6.5" y="7.5" width="8" height="7.5" fill="#d0d0d0" stroke="#212733" stroke-width="0.7"/></svg>
<svg class="a" style="left:490.75px;top:738.6px;" width="18" height="17" viewBox="0 0 18 17"><g transform="rotate(-38 8.5 8.5)" fill="none" stroke="#cfa469" stroke-width="1.5"><rect x="0.5" y="6" width="9" height="5.4" rx="2.7"/><rect x="7.5" y="6" width="9" height="5.4" rx="2.7"/></g></svg>
<div class="a" style="left:316px;top:769.5px;width:265px;height:24.3px;background:#303745;"></div>
<svg class="a" style="left:323px;top:774px;" width="16" height="16" viewBox="0 0 16 16"><circle cx="6.5" cy="6.5" r="4.8" fill="none" stroke="#c5ccd6" stroke-width="1.6"/><path d="M10,10 L15,15" stroke="#c5ccd6" stroke-width="1.9"/></svg>
<div class="a t " style="left:349px;top:774.0px;font-size:12.5px;color:#a5adba;font-size:12.5px;">Search</div>
<div class="a" style="left:570.8px;top:803px;width:17.8px;height:520.5px;background:#323a48;"></div>
<svg class="a" style="left:574.2px;top:807.6px;" width="12" height="8" viewBox="0 0 12 8"><path d="M1.2,6.6 L6,2 L10.8,6.6" stroke="#a9afbb" stroke-width="1.8" fill="none"/></svg>
<div class="a" style="left:576.2px;top:827.2px;width:7.8px;height:386.5px;background:#7d889b;border-radius:3.9px;"></div>
<svg class="a" style="left:574.2px;top:1312.3px;" width="12" height="8" viewBox="0 0 12 8"><path d="M1.5,1.5 L6,6 L10.5,1.5" stroke="#aeb6c2" stroke-width="1.8" fill="none"/></svg>
<div class="a" style="left:312px;top:813.0px;width:8px;height:2px;background:#c5ccd6;"></div>
<svg class="a" style="left:330px;top:805.5px;" width="17" height="17" viewBox="0 0 17 17"><path d="M4,1 L1,1 L1,5 M13,1 L16,1 L16,5 M1,12 L1,16 L4,16 M16,12 L16,16 L13,16" stroke="#e8e8e8" stroke-width="1.4" fill="none"/><polygon points="4,7 7,4 13,4 13,10 10,13 4,13" fill="#e8e8e8"/></svg>
<div class="a t " style="left:351px;top:806.0px;font-size:12.5px;">Views (all)</div>
<div class="a" style="left:329px;top:834.24px;width:8px;height:2px;background:#c5ccd6;"></div>
<div class="a" style="left:332px;top:831.24px;width:2px;height:8px;background:#c5ccd6;"></div>
<div class="a t " style="left:347px;top:827.24px;font-size:12.5px;">Structural Plans</div>
<div class="a" style="left:317px;top:835.24px;width:9px;height:1px;background:#4e5767;"></div>
<div class="a" style="left:329px;top:855.48px;width:8px;height:2px;background:#c5ccd6;"></div>
<div class="a t " style="left:347px;top:848.48px;font-size:12.5px;">Floor Plans</div>
<div class="a" style="left:317px;top:856.48px;width:9px;height:1px;background:#4e5767;"></div>
<svg class="a" style="left:364px;top:868.72px;" width="18" height="18" viewBox="0 0 18 18"><rect x="0.8" y="0.8" width="16.4" height="16.4" fill="none" stroke="#dfe3e8" stroke-width="1.3" stroke-dasharray="4.2 1.9" stroke-dashoffset="2.1"/><rect x="3.7" y="3.7" width="10.6" height="10.6" fill="none" stroke="#dfe3e8" stroke-width="1.1"/></svg>
<div class="a t " style="left:385px;top:869.72px;font-size:12.5px;">1st Floor</div>
<div class="a" style="left:333px;top:877.72px;width:29px;height:1px;background:#4e5767;"></div>
<svg class="a" style="left:364px;top:889.96px;" width="18" height="18" viewBox="0 0 18 18"><rect x="0.8" y="0.8" width="16.4" height="16.4" fill="none" stroke="#dfe3e8" stroke-width="1.3" stroke-dasharray="4.2 1.9" stroke-dashoffset="2.1"/><rect x="3.7" y="3.7" width="10.6" height="10.6" fill="#9fd0ff" stroke="#dfe3e8" stroke-width="1.1"/></svg>
<div class="a t " style="left:385px;top:890.96px;font-size:12.5px;">1st Floor-Proposed</div>
<div class="a" style="left:333px;top:898.96px;width:29px;height:1px;background:#4e5767;"></div>
<svg class="a" style="left:364px;top:911.2px;" width="18" height="18" viewBox="0 0 18 18"><rect x="0.8" y="0.8" width="16.4" height="16.4" fill="none" stroke="#dfe3e8" stroke-width="1.3" stroke-dasharray="4.2 1.9" stroke-dashoffset="2.1"/><rect x="3.7" y="3.7" width="10.6" height="10.6" fill="none" stroke="#dfe3e8" stroke-width="1.1"/></svg>
<div class="a t " style="left:385px;top:912.2px;font-size:12.5px;">Ground Floor</div>
<div class="a" style="left:333px;top:920.2px;width:29px;height:1px;background:#4e5767;"></div>
<svg class="a" style="left:364px;top:932.44px;" width="18" height="18" viewBox="0 0 18 18"><rect x="0.8" y="0.8" width="16.4" height="16.4" fill="none" stroke="#dfe3e8" stroke-width="1.3" stroke-dasharray="4.2 1.9" stroke-dashoffset="2.1"/><rect x="3.7" y="3.7" width="10.6" height="10.6" fill="#9fd0ff" stroke="#dfe3e8" stroke-width="1.1"/></svg>
<div class="a t " style="left:385px;top:933.44px;font-size:12.5px;">Ground Floor-Existing</div>
<div class="a" style="left:333px;top:941.44px;width:29px;height:1px;background:#4e5767;"></div>
<svg class="a" style="left:364px;top:953.68px;" width="18" height="18" viewBox="0 0 18 18"><rect x="0.8" y="0.8" width="16.4" height="16.4" fill="none" stroke="#dfe3e8" stroke-width="1.3" stroke-dasharray="4.2 1.9" stroke-dashoffset="2.1"/><rect x="3.7" y="3.7" width="10.6" height="10.6" fill="#9fd0ff" stroke="#dfe3e8" stroke-width="1.1"/></svg>
<div class="a t " style="left:385px;top:954.68px;font-size:12.5px;">Ground Floor-Proposed</div>
<div class="a" style="left:333px;top:962.68px;width:29px;height:1px;background:#4e5767;"></div>
<svg class="a" style="left:364px;top:974.92px;" width="18" height="18" viewBox="0 0 18 18"><rect x="0.8" y="0.8" width="16.4" height="16.4" fill="none" stroke="#dfe3e8" stroke-width="1.3" stroke-dasharray="4.2 1.9" stroke-dashoffset="2.1"/><rect x="3.7" y="3.7" width="10.6" height="10.6" fill="none" stroke="#dfe3e8" stroke-width="1.1"/></svg>
<div class="a t " style="left:385px;top:975.92px;font-size:12.5px;">Roof</div>
<div class="a" style="left:333px;top:983.92px;width:29px;height:1px;background:#4e5767;"></div>
<svg class="a" style="left:364px;top:996.16px;" width="18" height="18" viewBox="0 0 18 18"><rect x="0.8" y="0.8" width="16.4" height="16.4" fill="none" stroke="#dfe3e8" stroke-width="1.3" stroke-dasharray="4.2 1.9" stroke-dashoffset="2.1"/><rect x="3.7" y="3.7" width="10.6" height="10.6" fill="none" stroke="#dfe3e8" stroke-width="1.1"/></svg>
<div class="a t " style="left:385px;top:997.16px;font-size:12.5px;">Site</div>
<div class="a" style="left:333px;top:1005.16px;width:29px;height:1px;background:#4e5767;"></div>
<div class="a" style="left:329px;top:1025.4px;width:8px;height:2px;background:#c5ccd6;"></div>
<div class="a" style="left:332px;top:1022.4000000000001px;width:2px;height:8px;background:#c5ccd6;"></div>
<div class="a t " style="left:347px;top:1018.4000000000001px;font-size:12.5px;">Ceiling Plans</div>
<div class="a" style="left:317px;top:1026.4px;width:9px;height:1px;background:#4e5767;"></div>
<div class="a" style="left:329px;top:1046.6399999999999px;width:8px;height:2px;background:#c5ccd6;"></div>
<div class="a t " style="left:347px;top:1039.6399999999999px;font-size:12.5px;">3D Views</div>
<div class="a" style="left:317px;top:1047.6399999999999px;width:9px;height:1px;background:#4e5767;"></div>
<svg class="a" style="left:364px;top:1059.88px;" width="18" height="18" viewBox="0 0 18 18"><rect x="0.8" y="0.8" width="16.4" height="16.4" fill="none" stroke="#dfe3e8" stroke-width="1.3" stroke-dasharray="4.2 1.9" stroke-dashoffset="2.1"/><rect x="3.7" y="3.7" width="10.6" height="10.6" fill="none" stroke="#dfe3e8" stroke-width="1.1"/></svg>
<div class="a t " style="left:385px;top:1060.88px;font-size:12.5px;">3D</div>
<div class="a" style="left:333px;top:1068.88px;width:29px;height:1px;background:#4e5767;"></div>
<svg class="a" style="left:364px;top:1081.12px;" width="18" height="18" viewBox="0 0 18 18"><rect x="0.8" y="0.8" width="16.4" height="16.4" fill="none" stroke="#dfe3e8" stroke-width="1.3" stroke-dasharray="4.2 1.9" stroke-dashoffset="2.1"/><rect x="3.7" y="3.7" width="10.6" height="10.6" fill="none" stroke="#dfe3e8" stroke-width="1.1"/></svg>
<div class="a t " style="left:385px;top:1082.12px;font-size:12.5px;">3D View</div>
<div class="a" style="left:333px;top:1090.12px;width:29px;height:1px;background:#4e5767;"></div>
<svg class="a" style="left:364px;top:1102.36px;" width="18" height="18" viewBox="0 0 18 18"><rect x="0.8" y="0.8" width="16.4" height="16.4" fill="none" stroke="#dfe3e8" stroke-width="1.3" stroke-dasharray="4.2 1.9" stroke-dashoffset="2.1"/><rect x="3.7" y="3.7" width="10.6" height="10.6" fill="none" stroke="#dfe3e8" stroke-width="1.1"/></svg>
<div class="a t " style="left:385px;top:1103.36px;font-size:12.5px;">{3D}</div>
<div class="a" style="left:333px;top:1111.36px;width:29px;height:1px;background:#4e5767;"></div>
<div class="a" style="left:329px;top:1131.6px;width:8px;height:2px;background:#c5ccd6;"></div>
<div class="a t " style="left:347px;top:1124.6px;font-size:12.5px;">Elevations (Building Elevation)</div>
<div class="a" style="left:317px;top:1132.6px;width:9px;height:1px;background:#4e5767;"></div>
<svg class="a" style="left:364px;top:1144.84px;" width="18" height="18" viewBox="0 0 18 18"><rect x="0.8" y="0.8" width="16.4" height="16.4" fill="none" stroke="#dfe3e8" stroke-width="1.3" stroke-dasharray="4.2 1.9" stroke-dashoffset="2.1"/><rect x="3.7" y="3.7" width="10.6" height="10.6" fill="none" stroke="#dfe3e8" stroke-width="1.1"/></svg>
<div class="a t " style="left:385px;top:1145.84px;font-size:12.5px;">East</div>
<div class="a" style="left:333px;top:1153.84px;width:29px;height:1px;background:#4e5767;"></div>
<svg class="a" style="left:364px;top:1166.08px;" width="18" height="18" viewBox="0 0 18 18"><rect x="0.8" y="0.8" width="16.4" height="16.4" fill="none" stroke="#dfe3e8" stroke-width="1.3" stroke-dasharray="4.2 1.9" stroke-dashoffset="2.1"/><rect x="3.7" y="3.7" width="10.6" height="10.6" fill="none" stroke="#dfe3e8" stroke-width="1.1"/></svg>
<div class="a t " style="left:385px;top:1167.08px;font-size:12.5px;">North</div>
<div class="a" style="left:333px;top:1175.08px;width:29px;height:1px;background:#4e5767;"></div>
<div class="a" style="left:308px;top:1186.32px;width:263px;height:20px;background:#343c4a;"></div>
<svg class="a" style="left:364px;top:1187.32px;" width="18" height="18" viewBox="0 0 18 18"><rect x="0.8" y="0.8" width="16.4" height="16.4" fill="none" stroke="#dfe3e8" stroke-width="1.3" stroke-dasharray="4.2 1.9" stroke-dashoffset="2.1"/><rect x="3.7" y="3.7" width="10.6" height="10.6" fill="none" stroke="#dfe3e8" stroke-width="1.1"/></svg>
<div class="a t b" style="left:385px;top:1188.32px;font-size:12.5px;">South</div>
<div class="a" style="left:333px;top:1196.32px;width:29px;height:1px;background:#4e5767;"></div>
<svg class="a" style="left:364px;top:1208.56px;" width="18" height="18" viewBox="0 0 18 18"><rect x="0.8" y="0.8" width="16.4" height="16.4" fill="none" stroke="#dfe3e8" stroke-width="1.3" stroke-dasharray="4.2 1.9" stroke-dashoffset="2.1"/><rect x="3.7" y="3.7" width="10.6" height="10.6" fill="none" stroke="#dfe3e8" stroke-width="1.1"/></svg>
<div class="a t " style="left:385px;top:1209.56px;font-size:12.5px;">West</div>
<div class="a" style="left:333px;top:1217.56px;width:29px;height:1px;background:#4e5767;"></div>
<div class="a" style="left:329px;top:1237.8px;width:8px;height:2px;background:#c5ccd6;"></div>
<div class="a" style="left:332px;top:1234.8px;width:2px;height:8px;background:#c5ccd6;"></div>
<div class="a t " style="left:347px;top:1230.8px;font-size:12.5px;">Sections (Building Section)</div>
<div class="a" style="left:317px;top:1238.8px;width:9px;height:1px;background:#4e5767;"></div>
<svg class="a" style="left:329px;top:1251.04px;" width="18" height="18" viewBox="0 0 18 18"><rect x="0" y="0" width="18" height="18" fill="#e8e8e8"/><rect x="0" y="0" width="18" height="3" fill="#bdbdbd"/><rect x="2.5" y="5.5" width="4" height="4" fill="none" stroke="#3b4453" stroke-width="1"/><rect x="2.5" y="11.5" width="4" height="4" fill="none" stroke="#3b4453" stroke-width="1"/><path d="M8.5,6.5 L15.5,6.5 M8.5,9 L15.5,9 M8.5,12.5 L15.5,12.5 M8.5,15 L15.5,15" stroke="#3b4453" stroke-width="1"/></svg>
<div class="a t " style="left:350px;top:1252.04px;font-size:12.5px;">Legends</div>
<div class="a" style="left:312px;top:1280.28px;width:8px;height:2px;background:#c5ccd6;"></div>
<svg class="a" style="left:330px;top:1274.28px;" width="17" height="14" viewBox="0 0 17 14"><rect x="0.5" y="0.5" width="16" height="13" fill="none" stroke="#e8e8e8" stroke-width="1.2"/><rect x="0" y="0" width="17" height="3.5" fill="#e8e8e8"/><path d="M0,7 L17,7 M0,10.5 L17,10.5 M5.5,3 L5.5,14 M11,3 L11,14" stroke="#e8e8e8" stroke-width="1.1"/></svg>
<div class="a t " style="left:351px;top:1273.28px;font-size:12.5px;">Schedules/Quantities (all)</div>
<svg class="a" style="left:347px;top:1293.52px;" width="18" height="18" viewBox="0 0 18 18"><rect x="0.8" y="0.8" width="16.4" height="16.4" fill="none" stroke="#dfe3e8" stroke-width="1.3" stroke-dasharray="4.2 1.9" stroke-dashoffset="2.1"/><rect x="3.7" y="3.7" width="10.6" height="10.6" fill="none" stroke="#dfe3e8" stroke-width="1.1"/></svg>
<div class="a t " style="left:368px;top:1294.52px;font-size:12.5px;">Building Data</div>
<div class="a" style="left:317px;top:1302.52px;width:28px;height:1px;background:#4e5767;"></div>
<div class="a" style="left:316.5px;top:824px;width:1px;height:414.79999999999995px;background:#4e5767;"></div>
<div class="a" style="left:332.5px;top:864.48px;width:1px;height:140.67999999999995px;background:#4e5767;"></div>
<div class="a" style="left:332.5px;top:1055.6399999999999px;width:1px;height:55.72000000000003px;background:#4e5767;"></div>
<div class="a" style="left:332.5px;top:1140.6px;width:1px;height:76.96000000000004px;background:#4e5767;"></div>
<div class="a" style="left:316.5px;top:1289.28px;width:1px;height:13.240000000000009px;background:#4e5767;"></div>
<div class="a" style="left:305px;top:1313px;width:266px;height:10.5px;overflow:hidden;">
<div class="a t" style="left:46px;top:1.5px;">Sheets (all)</div>
<div class="a" style="left:7px;top:8.5px;width:8px;height:2px;background:#c5ccd6"></div>
<svg class="a" style="left:25px;top:2px" width="18" height="14" viewBox="0 0 18 14"><polygon points="0,5 7,0 14,10 17,10 17,14 0,14" fill="#e8e8e8"/></svg>
</div>
<div class="a" style="left:2334px;top:182px;width:38px;height:19px;background:#8a8a8a;border-radius:9.5px;"></div>
<div class="a" style="left:2338px;top:185.5px;width:12px;height:12px;background:#ffffff;border-radius:6px;"></div>
<div class="a t " style="left:2376px;top:175.5px;font-size:12.5px;font-size:12.6px;color:#e6e6e6;text-shadow:1px 1px 1px #000;">Accelerated Graphics</div>
<div class="a t " style="left:2376px;top:189.0px;font-size:12.5px;font-size:12.6px;font-style:italic;color:#e6e6e6;text-shadow:1px 1px 1px #000;">Tech Preview</div>
<div class="a" style="left:2506px;top:158px;width:32px;height:116px;background:#5b626e;border-radius:4px;border:1px solid #6a717d;box-shadow:0 1px 3px rgba(0,0,0,.5);"></div>
<svg class="a" style="left:2529px;top:160px;" width="7" height="7" viewBox="0 0 7 7"><path d="M0.5,0.5 L6.5,6.5 M6.5,0.5 L0.5,6.5" stroke="#d5d9df" stroke-width="1.2"/></svg>
<div class="a" style="left:2511px;top:177px;width:18px;height:18px;background:#a9adb4;border-radius:6px 2px 6px 6px;"></div>
<svg class="a" style="left:2513px;top:179px;" width="16" height="16" viewBox="0 0 16 16"><circle cx="7" cy="7" r="4.5" fill="none" stroke="#e9e9e9" stroke-width="1.5"/><path d="M3,12 L10,12" stroke="#e9e9e9" stroke-width="1.5"/></svg>
<div class="a" style="left:2522px;top:193px;width:11px;height:6px;background:#5578a8;border-radius:1px;opacity:0.85;"></div>
<div class="a" style="left:2508px;top:215.5px;width:28px;height:1px;background:#6f7682;"></div>
<div class="a" style="left:2514px;top:225px;width:11px;height:11px;background:#7fae5a;"></div>
<div class="a" style="left:2521px;top:233px;width:6px;height:6px;background:#d9dce2;border-radius:3px;"></div>
<div class="a" style="left:2520px;top:208px;width:3px;height:1.5px;background:#4a515c;"></div>
<div class="a" style="left:2520px;top:252px;width:3px;height:1.5px;background:#4a515c;"></div>
<svg class="a" style="left:2528px;top:264px;" width="7" height="8" viewBox="0 0 7 8"><rect x="0" y="0.5" width="7" height="1.3" fill="#d5d9df"/><rect x="0" y="3" width="7" height="1.3" fill="#d5d9df"/><polygon points="1,5 6,5 3.5,8" fill="#d5d9df"/></svg>
<svg class="a" style="left:377px;top:1343px;" width="18" height="18" viewBox="0 0 18 18"><defs><pattern id="ck" width="4" height="4" patternUnits="userSpaceOnUse"><rect width="4" height="4" fill="#9a9a9a"/><rect width="2" height="2" fill="#c4c4c4"/><rect x="2" y="2" width="2" height="2" fill="#c4c4c4"/></pattern></defs><rect x="0.5" y="2.5" width="17" height="13" fill="url(#ck)"/></svg>
<svg class="a" style="left:404px;top:1343px;" width="18" height="18" viewBox="0 0 18 18"><polygon points="1,5.5 4,2 17,2 17,12.5 14,16 1,16" fill="#5aa6e6"/><polygon points="1,5.5 4,2 17,2 14,5.5" fill="#8ccaf6"/><polygon points="14,5.5 17,2 17,12.5 14,16" fill="#3d86c6"/></svg>
<svg class="a" style="left:431px;top:1343px;" width="18" height="18" viewBox="0 0 18 18"><circle cx="7" cy="7.5" r="3.8" fill="#f7c352"/><path d="M7,1 L7,2.6 M7,12.4 L7,14 M0.5,7.5 L2.1,7.5 M2.4,2.9 L3.5,4 M11.6,2.9 L10.5,4 M2.4,12.1 L3.5,11" stroke="#f7c352" stroke-width="1.2"/><circle cx="13.5" cy="10" r="3.6" fill="#5fc8cf"/><rect x="12.0" y="13.5" width="3" height="3" fill="#eee"/></svg>
<svg class="a" style="left:458px;top:1343px;" width="18" height="18" viewBox="0 0 18 18"><ellipse cx="6" cy="15.5" rx="6" ry="1.8" fill="#10141a"/><circle cx="6.5" cy="7.5" r="6.3" fill="#dcdcdc"/><circle cx="14" cy="10.5" r="3.6" fill="#5fc8cf"/><rect x="12.5" y="14.0" width="3" height="3" fill="#eee"/></svg>
<svg class="a" style="left:485px;top:1343px;" width="18" height="18" viewBox="0 0 18 18"><path d="M5,15 L5,6 L15,6 M10,1 L10,6 M0,10.5 L3,10.5" stroke="#e0e0e0" stroke-width="1.8" fill="none"/><rect x="9" y="0" width="2" height="2" fill="#6aaee6"/><rect x="0" y="9.5" width="2" height="2" fill="#6aaee6"/><path d="M9.5,10 L16,16.5 M16,10 L9.5,16.5" stroke="#e8505a" stroke-width="2"/></svg>
<svg class="a" style="left:512px;top:1343px;" width="18" height="18" viewBox="0 0 18 18"><path d="M5,15 L5,6 L15,6 M10,1 L10,6 M0,10.5 L3,10.5" stroke="#e0e0e0" stroke-width="1.8" fill="none"/><rect x="9" y="0" width="2" height="2" fill="#6aaee6"/><rect x="0" y="9.5" width="2" height="2" fill="#6aaee6"/><circle cx="13.5" cy="10.5" r="3.6" fill="#5fc8cf"/><rect x="12.0" y="14.0" width="3" height="3" fill="#eee"/></svg>
<svg class="a" style="left:539px;top:1343px;" width="18" height="18" viewBox="0 0 18 18"><circle cx="4.5" cy="11" r="3.2" fill="none" stroke="#aab1bd" stroke-width="1.6"/><circle cx="13.5" cy="11" r="3.2" fill="none" stroke="#aab1bd" stroke-width="1.6"/><path d="M7.5,10.5 L10.5,10.5 M2,9 L4,4 M16,9 L14,4" stroke="#aab1bd" stroke-width="1.4" fill="none"/></svg>
<svg class="a" style="left:566px;top:1343px;" width="18" height="18" viewBox="0 0 18 18"><circle cx="9" cy="6.5" r="4.6" fill="#5fc8cf"/><rect x="7" y="11" width="4" height="4.5" rx="1" fill="#eee"/></svg>
<svg class="a" style="left:592px;top:1343px;" width="18" height="18" viewBox="0 0 18 18"><rect x="2" y="2" width="9" height="9" fill="#d8d8d8"/><rect x="4" y="4" width="5" height="1.2" fill="#555"/><rect x="4" y="6.5" width="5" height="1.2" fill="#555"/><polygon points="8,2 13,2 13,8" fill="#bbb"/><path d="M9,13 L9,16 L12,16 M16,13 L16,16 L13,16 M13,9.5 L16,9.5 L16,12" stroke="#e8e8e8" stroke-width="1.2" fill="none" stroke-dasharray="2 1"/></svg>
<svg class="a" style="left:619px;top:1343px;" width="18" height="18" viewBox="0 0 18 18"><path d="M1,16 L1,5 L5,1 L16,1 L16,12 M1,5 L12,5 L16,1 M12,5 L12,16" stroke="#d8d8d8" stroke-width="1.1" fill="none"/><path d="M3,16 L3,8 M6,16 L6,8 M9,16 L9,8 M1,9 L12,9 M1,12.5 L12,12.5" stroke="#e88a8a" stroke-width="1"/><circle cx="13.8" cy="11" r="3.6" fill="#f7c352"/><rect x="12.3" y="14.5" width="3" height="3" fill="#eee"/></svg>
<svg class="a" style="left:646px;top:1343px;" width="18" height="18" viewBox="0 0 18 18"><path d="M1,1 L1,12 M16,1 L16,6 M1,3.5 L16,3.5 M1,11 L10,11" stroke="#e0e0e0" stroke-width="1.3" fill="none"/><path d="M3,11 L9,11" stroke="#e0e0e0" stroke-width="1.3" stroke-dasharray="2 1.5"/><circle cx="14" cy="10.5" r="3.6" fill="#5fc8cf"/><rect x="12.5" y="14.0" width="3" height="3" fill="#eee"/></svg>
<svg class="a" style="left:673px;top:1346px;" width="8" height="12" viewBox="0 0 8 12"><path d="M6.5,1.5 L2,6 L6.5,10.5" stroke="#9aa3b0" stroke-width="1.8" fill="none"/></svg>
<div class="a" style="left:1520px;top:1368.2px;width:5px;height:2.8px;background:#6aaee6;"></div>
<div class="a" style="left:1526px;top:1368.2px;width:4px;height:2.8px;background:#e8a050;"></div>
<div class="a" style="left:1773px;top:1368.2px;width:9px;height:2.8px;background:#aeb4be;"></div>
<div class="a" style="left:1812px;top:1368.2px;width:17px;height:2.8px;background:#aeb4be;"></div>
<div class="a" style="left:1838px;top:1368.2px;width:16px;height:2.8px;background:#8b93a0;"></div>
<div class="a" style="left:2312px;top:1368.2px;width:14px;height:2.8px;background:#aeb4be;"></div>
<div class="a" style="left:2342px;top:1368.2px;width:6px;height:2.8px;background:#6aaee6;"></div>
<div class="a" style="left:2349px;top:1368.2px;width:6px;height:2.8px;background:#e8505a;"></div>
<div class="a" style="left:2368px;top:1368.2px;width:5px;height:2.8px;background:#aeb4be;"></div>
<div class="a" style="left:2390px;top:1368.2px;width:8px;height:2.8px;background:#6aaee6;"></div>
<div class="a" style="left:2400px;top:1368.2px;width:6px;height:2.8px;background:#e8505a;"></div>
<div class="a" style="left:2418px;top:1368.2px;width:3px;height:2.8px;background:#aeb4be;"></div>
<div class="a" style="left:2446px;top:1368.2px;width:3px;height:2.8px;background:#aeb4be;"></div>
<div class="a" style="left:2462px;top:1368.2px;width:16px;height:2.8px;background:#c5cad2;"></div>
<div class="a wm" style="left:106px;top:29.9px;">DOMV.UK</div>
<div class="a wm" style="left:1171px;top:45.9px;">DOMV.UK</div>
<div class="a wm" style="left:2212px;top:31.4px;">DOMV.UK</div>
<div class="a wm" style="left:645px;top:272.4px;">DOMV.UK</div>
<div class="a wm" style="left:1733px;top:279.9px;">DOMV.UK</div>
<div class="a wm" style="left:134px;top:572.4px;">DOMV.UK</div>
<div class="a wm" style="left:1249px;top:582.4px;">DOMV.UK</div>
<div class="a wm" style="left:2154px;top:572.4px;">DOMV.UK</div>
<div class="a wm" style="left:669px;top:870.9px;">DOMV.UK</div>
<div class="a wm" style="left:1777.5px;top:864.4px;">DOMV.UK</div>
<div class="a wm" style="left:74px;top:1073.4px;">DOMV.UK</div>
<div class="a wm" style="left:1156.5px;top:1063.4px;">DOMV.UK</div>
<div class="a wm" style="left:2022.5px;top:1055.9px;">DOMV.UK</div>
<div class="a wm" style="left:719px;top:1223.4px;">DOMV.UK</div>
<div class="a wm" style="left:1630.5px;top:1219.9px;">DOMV.UK</div>
</body></html>
